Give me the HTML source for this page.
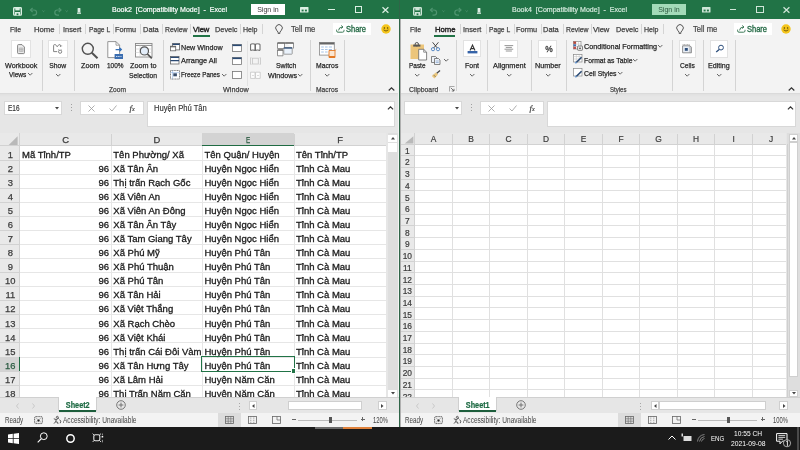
<!DOCTYPE html><html><head><meta charset="utf-8"><style>
html,body{margin:0;padding:0;width:800px;height:450px;overflow:hidden;background:#1c1c1c;}
.t{position:absolute;white-space:nowrap;font-family:"Liberation Sans", sans-serif;}
svg{overflow:visible}
</style></head><body><div style="position:absolute;left:0;top:0;width:800px;height:450px;overflow:hidden;will-change:transform">
<div style="position:absolute;left:0px;top:0px;width:399px;height:19px;background:#217346"></div>
<svg style="position:absolute;left:12.5px;top:6.9px;" width="9" height="8.8" viewBox="0 0 9 8.8"><rect x="0.7" y="0.7" width="7.6" height="7.4" rx="0.8" fill="none" stroke="#dcefe3" stroke-width="1.4"/><rect x="2.3" y="0.8" width="4.4" height="2.6" fill="#dcefe3"/><rect x="2" y="5" width="5" height="3.2" fill="#dcefe3"/><rect x="3.6" y="6.4" width="1.8" height="1.8" fill="#217346"/></svg>
<svg style="position:absolute;left:29px;top:6.5px;" width="17" height="8" viewBox="0 0 17 8"><path d="M1.8 3 H5 a2.6 2.6 0 0 1 0 5.2 H3.5" fill="none" stroke="#4f9570" stroke-width="1.2"/><path d="M3.6 1 L1.4 3 L3.6 5" fill="none" stroke="#4f9570" stroke-width="1.2"/><path d="M13.4 3.6 l1.1 1.1 l1.1 -1.1" fill="none" stroke="#4f9570" stroke-width="0.8"/></svg>
<svg style="position:absolute;left:52.5px;top:6.5px;" width="17" height="8" viewBox="0 0 17 8"><path d="M7.6 3 H4.4 a2.6 2.6 0 0 0 0 5.2 H6" fill="none" stroke="#4f9570" stroke-width="1.2"/><path d="M5.8 1 L8 3 L5.8 5" fill="none" stroke="#4f9570" stroke-width="1.2"/><path d="M12.6 3.6 l1.1 1.1 l1.1 -1.1" fill="none" stroke="#4f9570" stroke-width="0.8"/></svg>
<svg style="position:absolute;left:77px;top:8px;" width="4" height="6" viewBox="0 0 4 6"><rect x="0.6" y="0" width="2.8" height="4.5" rx="0.5" fill="#dbeee3"/><rect x="0" y="4.6" width="4" height="1.2" fill="#dbeee3"/></svg>
<div class="t" style="left:111.60px;top:6.00px;font-size:7.8px;line-height:8.72px;color:#ffffff;transform:scaleX(0.9023);transform-origin:0 0;-webkit-text-stroke:0.2px #ffffff">Book2&nbsp; [Compatibility Mode]&nbsp; -&nbsp; Excel</div>
<div style="position:absolute;left:251px;top:4px;width:34.2px;height:11px;background:#fff"></div>
<div class="t" style="left:256.27px;top:6.00px;font-size:7.8px;line-height:8.72px;color:#3a3a3a;transform:scaleX(0.9014);transform-origin:11.93px 0;">Sign in</div>
<svg style="position:absolute;left:300.0px;top:6.7px;" width="8.5" height="5.6" viewBox="0 0 8.5 5.6"><rect x="0" y="0" width="8.5" height="5.6" rx="0.6" fill="#dcefe3"/><rect x="1.6" y="2.6" width="2" height="1.8" fill="#217346"/><rect x="4.9" y="2.6" width="2" height="1.8" fill="#217346"/></svg>
<div style="position:absolute;left:328.0px;top:8.7px;width:6.7px;height:1.3px;background:#dcefe3"></div>
<div style="position:absolute;left:354.8px;top:6.4px;width:7.4px;height:6.2px;border:1.4px solid #dcefe3;box-sizing:border-box"></div>
<svg style="position:absolute;left:381.9px;top:6.7px;" width="7" height="6" viewBox="0 0 7 6"><path d="M0.5 0.3 L6.4 5.7 M6.4 0.3 L0.5 5.7" stroke="#dcefe3" stroke-width="1.25"/></svg>
<div style="position:absolute;left:0px;top:19px;width:399px;height:74px;background:#f3f3f3"></div>
<div style="position:absolute;left:0px;top:93px;width:399px;height:1px;background:#dadada"></div>
<div style="position:absolute;left:0px;top:94px;width:399px;height:3px;background:linear-gradient(#e0e0e0,#e6e6e6)"></div>
<div class="t" style="left:9.75px;top:26.00px;font-size:7.8px;line-height:8.72px;color:#404040;transform:scaleX(0.8794);transform-origin:0 0;-webkit-text-stroke:0.25px #404040;">File</div>
<div class="t" style="left:34.40px;top:26.00px;font-size:7.8px;line-height:8.72px;color:#404040;transform:scaleX(0.9899);transform-origin:0 0;-webkit-text-stroke:0.25px #404040;">Home</div>
<div class="t" style="left:62.60px;top:26.00px;font-size:7.8px;line-height:8.72px;color:#404040;transform:scaleX(0.9432);transform-origin:0 0;-webkit-text-stroke:0.25px #404040;">Insert</div>
<div class="t" style="left:88.60px;top:26.00px;font-size:7.8px;line-height:8.72px;color:#404040;transform:scaleX(0.8536);transform-origin:0 0;-webkit-text-stroke:0.25px #404040;">Page L</div>
<div class="t" style="left:115.40px;top:26.00px;font-size:7.8px;line-height:8.72px;color:#404040;transform:scaleX(0.9408);transform-origin:0 0;-webkit-text-stroke:0.25px #404040;">Formu</div>
<div class="t" style="left:142.75px;top:26.00px;font-size:7.8px;line-height:8.72px;color:#404040;transform:scaleX(0.9556);transform-origin:0 0;-webkit-text-stroke:0.25px #404040;">Data</div>
<div class="t" style="left:165.00px;top:26.00px;font-size:7.8px;line-height:8.72px;color:#404040;transform:scaleX(0.8750);transform-origin:0 0;-webkit-text-stroke:0.25px #404040;">Review</div>
<div class="t" style="left:192.60px;top:26.00px;font-size:7.8px;line-height:8.72px;color:#222;transform:scaleX(0.9770);transform-origin:0 0;-webkit-text-stroke:0.4px #222">View</div>
<div class="t" style="left:214.50px;top:26.00px;font-size:7.8px;line-height:8.72px;color:#404040;transform:scaleX(0.9436);transform-origin:0 0;-webkit-text-stroke:0.25px #404040;">Develc</div>
<div class="t" style="left:242.50px;top:26.00px;font-size:7.8px;line-height:8.72px;color:#404040;transform:scaleX(0.9037);transform-origin:0 0;-webkit-text-stroke:0.25px #404040;">Help</div>
<div style="position:absolute;left:59.0px;top:24px;width:1px;height:10px;background:#d4d4d4"></div>
<div style="position:absolute;left:85.0px;top:24px;width:1px;height:10px;background:#d4d4d4"></div>
<div style="position:absolute;left:113.0px;top:24px;width:1px;height:10px;background:#d4d4d4"></div>
<div style="position:absolute;left:140.0px;top:24px;width:1px;height:10px;background:#d4d4d4"></div>
<div style="position:absolute;left:162.0px;top:24px;width:1px;height:10px;background:#d4d4d4"></div>
<div style="position:absolute;left:190.0px;top:24px;width:1px;height:10px;background:#d4d4d4"></div>
<div style="position:absolute;left:240.0px;top:24px;width:1px;height:10px;background:#d4d4d4"></div>
<div style="position:absolute;left:262.0px;top:24px;width:1px;height:10px;background:#d4d4d4"></div>
<div style="position:absolute;left:192.5px;top:34.5px;width:17px;height:2px;background:#217346"></div>
<svg style="position:absolute;left:274.8px;top:24.3px;" width="8" height="10" viewBox="0 0 8 10"><path d="M1.6 6.2 A3.3 3.3 0 1 1 6.4 6.2 L4.9 8.2 v1.2 h-1.8 v-1.2 z" fill="none" stroke="#444" stroke-width="0.9" stroke-linejoin="round"/></svg>
<div class="t" style="left:291.20px;top:25.00px;font-size:8.4px;line-height:9.39px;color:#444;transform:scaleX(0.9169);transform-origin:0 0;-webkit-text-stroke:0.2px #444">Tell me</div>
<div style="position:absolute;left:332.6px;top:23px;width:38.5px;height:12px;background:#fff"></div>
<svg style="position:absolute;left:336.0px;top:25.3px;" width="9" height="8" viewBox="0 0 9 8"><path d="M0.6 4.6 v1.2 a1.4 1.4 0 0 0 1.4 1.4 h4.6 a1.4 1.4 0 0 0 1.4 -1.4 v-1" fill="none" stroke="#3d7a58" stroke-width="1"/><path d="M2.6 5.4 q0 -3.2 4 -3.4 M5.2 0.5 l1.8 1.5 l-1.8 1.5" fill="none" stroke="#3d7a58" stroke-width="1"/></svg>
<div class="t" style="left:345.75px;top:25.00px;font-size:8.4px;line-height:9.39px;color:#276b47;transform:scaleX(0.8969);transform-origin:0 0;-webkit-text-stroke:0.35px #276b47">Share</div>
<svg style="position:absolute;left:380.75px;top:23.5px;" width="10" height="10" viewBox="0 0 10 10"><circle cx="5" cy="5" r="4.7" fill="#f4c51c"/><circle cx="3.4" cy="3.9" r="0.75" fill="#5a4500"/><circle cx="6.6" cy="3.9" r="0.75" fill="#5a4500"/><path d="M2.6 5.9 q2.4 2.3 4.8 0" fill="none" stroke="#5a4500" stroke-width="0.8"/></svg>
<svg style="position:absolute;left:387.5px;top:87px;" width="7" height="4" viewBox="0 0 7 4"><path d="M0.7 3.5 L3.5 0.8 L6.3 3.5" fill="none" stroke="#333" stroke-width="1.2"/></svg>
<div style="position:absolute;left:400px;top:0px;width:400px;height:19px;background:#217346"></div>
<svg style="position:absolute;left:412.5px;top:6.9px;" width="9" height="8.8" viewBox="0 0 9 8.8"><rect x="0.7" y="0.7" width="7.6" height="7.4" rx="0.8" fill="none" stroke="#cfe6d8" stroke-width="1.4"/><rect x="2.3" y="0.8" width="4.4" height="2.6" fill="#cfe6d8"/><rect x="2" y="5" width="5" height="3.2" fill="#cfe6d8"/><rect x="3.6" y="6.4" width="1.8" height="1.8" fill="#217346"/></svg>
<svg style="position:absolute;left:429px;top:6.5px;" width="17" height="8" viewBox="0 0 17 8"><path d="M1.8 3 H5 a2.6 2.6 0 0 1 0 5.2 H3.5" fill="none" stroke="#4f9570" stroke-width="1.2"/><path d="M3.6 1 L1.4 3 L3.6 5" fill="none" stroke="#4f9570" stroke-width="1.2"/><path d="M13.4 3.6 l1.1 1.1 l1.1 -1.1" fill="none" stroke="#4f9570" stroke-width="0.8"/></svg>
<svg style="position:absolute;left:452.5px;top:6.5px;" width="17" height="8" viewBox="0 0 17 8"><path d="M7.6 3 H4.4 a2.6 2.6 0 0 0 0 5.2 H6" fill="none" stroke="#4f9570" stroke-width="1.2"/><path d="M5.8 1 L8 3 L5.8 5" fill="none" stroke="#4f9570" stroke-width="1.2"/><path d="M12.6 3.6 l1.1 1.1 l1.1 -1.1" fill="none" stroke="#4f9570" stroke-width="0.8"/></svg>
<svg style="position:absolute;left:477px;top:8px;" width="4" height="6" viewBox="0 0 4 6"><rect x="0.6" y="0" width="2.8" height="4.5" rx="0.5" fill="#dbeee3"/><rect x="0" y="4.6" width="4" height="1.2" fill="#dbeee3"/></svg>
<div class="t" style="left:511.60px;top:6.00px;font-size:7.8px;line-height:8.72px;color:#d5eadd;transform:scaleX(0.9023);transform-origin:0 0;-webkit-text-stroke:0.2px #d5eadd">Book4&nbsp; [Compatibility Mode]&nbsp; -&nbsp; Excel</div>
<div style="position:absolute;left:652px;top:4px;width:34.2px;height:11px;background:#a3dbb9"></div>
<div class="t" style="left:657.27px;top:6.00px;font-size:7.8px;line-height:8.72px;color:#2d5a40;transform:scaleX(0.9014);transform-origin:11.93px 0;">Sign in</div>
<svg style="position:absolute;left:701.5px;top:6.7px;" width="8.5" height="5.6" viewBox="0 0 8.5 5.6"><rect x="0" y="0" width="8.5" height="5.6" rx="0.6" fill="#cfe6d8"/><rect x="1.6" y="2.6" width="2" height="1.8" fill="#217346"/><rect x="4.9" y="2.6" width="2" height="1.8" fill="#217346"/></svg>
<div style="position:absolute;left:729.5px;top:8.7px;width:6.7px;height:1.3px;background:#cfe6d8"></div>
<div style="position:absolute;left:756.3px;top:6.4px;width:7.4px;height:6.2px;border:1.4px solid #cfe6d8;box-sizing:border-box"></div>
<svg style="position:absolute;left:783.4px;top:6.7px;" width="7" height="6" viewBox="0 0 7 6"><path d="M0.5 0.3 L6.4 5.7 M6.4 0.3 L0.5 5.7" stroke="#cfe6d8" stroke-width="1.25"/></svg>
<div style="position:absolute;left:400px;top:19px;width:400px;height:74px;background:#f3f3f3"></div>
<div style="position:absolute;left:400px;top:93px;width:400px;height:1px;background:#dadada"></div>
<div style="position:absolute;left:400px;top:94px;width:400px;height:3px;background:linear-gradient(#e0e0e0,#e6e6e6)"></div>
<div class="t" style="left:410.35px;top:26.00px;font-size:7.8px;line-height:8.72px;color:#404040;transform:scaleX(0.8794);transform-origin:0 0;-webkit-text-stroke:0.25px #404040;">File</div>
<div class="t" style="left:435.00px;top:26.00px;font-size:7.8px;line-height:8.72px;color:#222;transform:scaleX(0.9899);transform-origin:0 0;-webkit-text-stroke:0.4px #222">Home</div>
<div class="t" style="left:463.20px;top:26.00px;font-size:7.8px;line-height:8.72px;color:#404040;transform:scaleX(0.9432);transform-origin:0 0;-webkit-text-stroke:0.25px #404040;">Insert</div>
<div class="t" style="left:489.20px;top:26.00px;font-size:7.8px;line-height:8.72px;color:#404040;transform:scaleX(0.8536);transform-origin:0 0;-webkit-text-stroke:0.25px #404040;">Page L</div>
<div class="t" style="left:516.00px;top:26.00px;font-size:7.8px;line-height:8.72px;color:#404040;transform:scaleX(0.9408);transform-origin:0 0;-webkit-text-stroke:0.25px #404040;">Formu</div>
<div class="t" style="left:543.35px;top:26.00px;font-size:7.8px;line-height:8.72px;color:#404040;transform:scaleX(0.9556);transform-origin:0 0;-webkit-text-stroke:0.25px #404040;">Data</div>
<div class="t" style="left:565.60px;top:26.00px;font-size:7.8px;line-height:8.72px;color:#404040;transform:scaleX(0.8750);transform-origin:0 0;-webkit-text-stroke:0.25px #404040;">Review</div>
<div class="t" style="left:593.20px;top:26.00px;font-size:7.8px;line-height:8.72px;color:#404040;transform:scaleX(0.9770);transform-origin:0 0;-webkit-text-stroke:0.25px #404040;">View</div>
<div class="t" style="left:615.70px;top:26.00px;font-size:7.8px;line-height:8.72px;color:#404040;transform:scaleX(0.9436);transform-origin:0 0;-webkit-text-stroke:0.25px #404040;">Develc</div>
<div class="t" style="left:643.70px;top:26.00px;font-size:7.8px;line-height:8.72px;color:#404040;transform:scaleX(0.9037);transform-origin:0 0;-webkit-text-stroke:0.25px #404040;">Help</div>
<div style="position:absolute;left:459.6px;top:24px;width:1px;height:10px;background:#d4d4d4"></div>
<div style="position:absolute;left:485.6px;top:24px;width:1px;height:10px;background:#d4d4d4"></div>
<div style="position:absolute;left:513.6px;top:24px;width:1px;height:10px;background:#d4d4d4"></div>
<div style="position:absolute;left:540.6px;top:24px;width:1px;height:10px;background:#d4d4d4"></div>
<div style="position:absolute;left:562.6px;top:24px;width:1px;height:10px;background:#d4d4d4"></div>
<div style="position:absolute;left:590.6px;top:24px;width:1px;height:10px;background:#d4d4d4"></div>
<div style="position:absolute;left:641.2px;top:24px;width:1px;height:10px;background:#d4d4d4"></div>
<div style="position:absolute;left:663.2px;top:24px;width:1px;height:10px;background:#d4d4d4"></div>
<div style="position:absolute;left:434.4px;top:34.5px;width:20.6px;height:2px;background:#217346"></div>
<svg style="position:absolute;left:676.1px;top:24.3px;" width="8" height="10" viewBox="0 0 8 10"><path d="M1.6 6.2 A3.3 3.3 0 1 1 6.4 6.2 L4.9 8.2 v1.2 h-1.8 v-1.2 z" fill="none" stroke="#444" stroke-width="0.9" stroke-linejoin="round"/></svg>
<div class="t" style="left:692.50px;top:25.00px;font-size:8.4px;line-height:9.39px;color:#444;transform:scaleX(0.9169);transform-origin:0 0;-webkit-text-stroke:0.2px #444">Tell me</div>
<div style="position:absolute;left:733.9000000000001px;top:23px;width:38.5px;height:12px;background:#fff"></div>
<svg style="position:absolute;left:737.3px;top:25.3px;" width="9" height="8" viewBox="0 0 9 8"><path d="M0.6 4.6 v1.2 a1.4 1.4 0 0 0 1.4 1.4 h4.6 a1.4 1.4 0 0 0 1.4 -1.4 v-1" fill="none" stroke="#3d7a58" stroke-width="1"/><path d="M2.6 5.4 q0 -3.2 4 -3.4 M5.2 0.5 l1.8 1.5 l-1.8 1.5" fill="none" stroke="#3d7a58" stroke-width="1"/></svg>
<div class="t" style="left:747.05px;top:25.00px;font-size:8.4px;line-height:9.39px;color:#276b47;transform:scaleX(0.8969);transform-origin:0 0;-webkit-text-stroke:0.35px #276b47">Share</div>
<svg style="position:absolute;left:781.35px;top:23.5px;" width="10" height="10" viewBox="0 0 10 10"><circle cx="5" cy="5" r="4.7" fill="#f4c51c"/><circle cx="3.4" cy="3.9" r="0.75" fill="#5a4500"/><circle cx="6.6" cy="3.9" r="0.75" fill="#5a4500"/><path d="M2.6 5.9 q2.4 2.3 4.8 0" fill="none" stroke="#5a4500" stroke-width="0.8"/></svg>
<svg style="position:absolute;left:788.1px;top:87px;" width="7" height="4" viewBox="0 0 7 4"><path d="M0.7 3.5 L3.5 0.8 L6.3 3.5" fill="none" stroke="#333" stroke-width="1.2"/></svg>
<div style="position:absolute;left:11.4px;top:39.6px;width:19.200000000000003px;height:18.4px;background:#fff;border:1px solid #e2e2e2;box-sizing:border-box"></div>
<svg style="position:absolute;left:16.6px;top:44px;" width="8" height="9.5" viewBox="0 0 8 9.5"><path d="M0.6 1.4 a0.8 0.8 0 0 1 0.8 -0.8 h3.6 l2.4 2.4 v5.8 a0.8 0.8 0 0 1 -0.8 0.8 h-5.2 a0.8 0.8 0 0 1 -0.8 -0.8 z" fill="#ececec" stroke="#777" stroke-width="0.9"/><path d="M2.3 4 h3.6 v3.4 h-3.6 z M2.3 5.7 h3.6 M4.1 4 v3.4" fill="none" stroke="#999" stroke-width="0.55"/></svg>
<div class="t" style="left:4.70px;top:62.00px;font-size:7.8px;line-height:8.72px;color:#262626;transform:scaleX(0.9233);transform-origin:0 0;-webkit-text-stroke:0.25px #262626;">Workbook</div>
<div class="t" style="left:8.80px;top:71.00px;font-size:7.8px;line-height:8.72px;color:#262626;transform:scaleX(0.8421);transform-origin:0 0;-webkit-text-stroke:0.25px #262626;">Views</div>
<svg style="position:absolute;left:26.8px;top:72.30000000000001px;" width="6.4" height="4.2" viewBox="0 0 6.4 4.2"><path d="M1 1 L3.2 3.2 L5.4 1" fill="none" stroke="#555" stroke-width="0.9"/></svg>
<div style="position:absolute;left:42px;top:40px;width:1px;height:51px;background:#d4d4d4"></div>
<div style="position:absolute;left:48.4px;top:39.6px;width:19.199999999999996px;height:18.4px;background:#fff;border:1px solid #e2e2e2;box-sizing:border-box"></div>
<svg style="position:absolute;left:53px;top:43.5px;" width="10" height="10" viewBox="0 0 10 10"><path d="M0.6 7.6 V1.6 a1 1 0 0 1 1 -1 h0.9 l1.7 2.2 l1.7 -2.2 h0.6 a1 1 0 0 1 1 1 v1.2" fill="none" stroke="#777" stroke-width="0.9"/><path d="M0.6 7.6 h3.6" stroke="#777" stroke-width="0.9"/><path d="M6.8 1.9 h2.4 M5.2 5.4 l1 0.8 M9 5.4 l-0.8 0.8" stroke="#888" stroke-width="0.7"/><circle cx="7.1" cy="7.7" r="1.6" fill="#fff" stroke="#777" stroke-width="0.9"/></svg>
<div class="t" style="left:48.23px;top:62.00px;font-size:7.8px;line-height:8.72px;color:#262626;transform:scaleX(0.8704);transform-origin:9.77px 0;-webkit-text-stroke:0.25px #262626;">Show</div>
<svg style="position:absolute;left:54.8px;top:72.5px;" width="6.4" height="4.2" viewBox="0 0 6.4 4.2"><path d="M1 1 L3.2 3.2 L5.4 1" fill="none" stroke="#555" stroke-width="0.9"/></svg>
<div style="position:absolute;left:73.5px;top:40px;width:1px;height:51px;background:#d4d4d4"></div>
<svg style="position:absolute;left:81px;top:42px;" width="18" height="17" viewBox="0 0 18 17"><circle cx="6.8" cy="6.8" r="5.5" fill="none" stroke="#505050" stroke-width="1.4"/><path d="M10.8 10.8 L16.5 16.3" stroke="#505050" stroke-width="2"/></svg>
<div class="t" style="left:81.40px;top:62.00px;font-size:7.8px;line-height:8.72px;color:#262626;transform:scaleX(0.9279);transform-origin:0 0;-webkit-text-stroke:0.25px #262626;">Zoom</div>
<svg style="position:absolute;left:107px;top:41px;" width="17" height="19" viewBox="0 0 17 19"><path d="M0.8 0.6 h8.2 l3.6 3.6 v12.4 h-11.8 z" fill="#fff" stroke="#8a8a8a" stroke-width="0.9"/><path d="M9 0.6 v3.6 h3.6" fill="none" stroke="#8a8a8a" stroke-width="0.8"/><path d="M8.6 8.6 h5.6 M12.4 6.8 l1.9 1.8 l-1.9 1.8" fill="none" stroke="#3570b8" stroke-width="1.3"/><rect x="7.6" y="13" width="8.4" height="5" fill="#3a6db0"/><path d="M9 15.5 h5.6" stroke="#c9d9ee" stroke-width="1" stroke-dasharray="1.2 0.5"/></svg>
<div class="t" style="left:107.30px;top:62.00px;font-size:7.8px;line-height:8.72px;color:#262626;transform:scaleX(0.8270);transform-origin:0 0;-webkit-text-stroke:0.25px #262626;">100%</div>
<svg style="position:absolute;left:134.5px;top:42.5px;" width="18" height="16" viewBox="0 0 18 16"><rect x="0.5" y="0.5" width="16.5" height="13.5" fill="#fff" stroke="#888" stroke-width="0.9"/><path d="M0.5 2.4 h16.5" stroke="#888" stroke-width="1"/><path d="M0.5 6 h16.5 M0.5 9.5 h16.5 M5 2.4 v11.6 M11 2.4 v11.6" stroke="#cfcfcf" stroke-width="0.6"/><circle cx="9.4" cy="7.9" r="4.1" fill="#e3edf9" stroke="#555" stroke-width="1.2"/><path d="M12.3 10.8 L16.8 15.4" stroke="#555" stroke-width="1.7"/></svg>
<div class="t" style="left:129.50px;top:62.00px;font-size:7.8px;line-height:8.72px;color:#262626;transform:scaleX(0.9262);transform-origin:0 0;-webkit-text-stroke:0.25px #262626;">Zoom to</div>
<div class="t" style="left:129.00px;top:72.00px;font-size:7.8px;line-height:8.72px;color:#262626;transform:scaleX(0.8726);transform-origin:0 0;-webkit-text-stroke:0.25px #262626;">Selection</div>
<div class="t" style="left:109.00px;top:86.00px;font-size:7.8px;line-height:8.72px;color:#404040;transform:scaleX(0.8527);transform-origin:0 0;-webkit-text-stroke:0.25px #404040;">Zoom</div>
<div style="position:absolute;left:163px;top:40px;width:1px;height:51px;background:#d4d4d4"></div>
<svg style="position:absolute;left:169.5px;top:42.5px;" width="10" height="8.5" viewBox="0 0 10 8.5"><rect x="2.6" y="0.5" width="7" height="6.4" fill="#fff" stroke="#666" stroke-width="0.8"/><path d="M2.6 1.3 h7" stroke="#2b4a73" stroke-width="1.4"/><rect x="0.5" y="3.2" width="5.2" height="4.6" fill="#fff" stroke="#666" stroke-width="0.8"/><path d="M0.5 3.8 h5.2" stroke="#555" stroke-width="1"/></svg>
<div class="t" style="left:181.00px;top:44.00px;font-size:7.8px;line-height:8.72px;color:#262626;transform:scaleX(0.9136);transform-origin:0 0;-webkit-text-stroke:0.25px #262626;">New Window</div>
<svg style="position:absolute;left:169.5px;top:56px;" width="9.5" height="8.5" viewBox="0 0 9.5 8.5"><rect x="0.5" y="0.5" width="8.5" height="7.5" fill="#fff" stroke="#666" stroke-width="0.8"/><path d="M0.5 1.3 h8.5 M0.5 4.6 h8.5" stroke="#2b4a73" stroke-width="1.3"/></svg>
<div class="t" style="left:181.00px;top:57.00px;font-size:7.8px;line-height:8.72px;color:#262626;transform:scaleX(0.9435);transform-origin:0 0;-webkit-text-stroke:0.25px #262626;">Arrange All</div>
<svg style="position:absolute;left:169.7px;top:69.9px;" width="10" height="9.5" viewBox="0 0 10 9.5"><rect x="0.5" y="0.5" width="9" height="8.5" fill="#fff" stroke="#666" stroke-width="0.8" stroke-dasharray="1.1 0.5"/><path d="M0.5 2.6 h9 M2.6 0.5 v8.5" stroke="#8fb4e0" stroke-width="0.6"/><rect x="3.3" y="3.3" width="3.6" height="3" fill="#3b4f6b"/></svg>
<div class="t" style="left:181.00px;top:71.00px;font-size:7.8px;line-height:8.72px;color:#262626;transform:scaleX(0.8031);transform-origin:0 0;-webkit-text-stroke:0.25px #262626;">Freeze Panes</div>
<svg style="position:absolute;left:220.8px;top:72.5px;" width="6.4" height="4.2" viewBox="0 0 6.4 4.2"><path d="M1 1 L3.2 3.2 L5.4 1" fill="none" stroke="#555" stroke-width="0.9"/></svg>
<svg style="position:absolute;left:231.8px;top:43.5px;" width="10" height="8" viewBox="0 0 10 8"><rect x="0.5" y="0.5" width="9" height="7" fill="#fff" stroke="#777" stroke-width="0.8"/><rect x="0.5" y="0.5" width="9" height="1.6" fill="#2b4a73"/></svg>
<svg style="position:absolute;left:231.8px;top:57px;" width="10" height="8" viewBox="0 0 10 8"><rect x="0.5" y="0.5" width="9" height="7" fill="#fff" stroke="#777" stroke-width="0.8"/><rect x="0.5" y="0.5" width="9" height="1.6" fill="#2b4a73"/></svg>
<svg style="position:absolute;left:231.8px;top:71px;" width="10" height="8" viewBox="0 0 10 8"><rect x="0.5" y="0.5" width="9" height="7" fill="#fff" stroke="#777" stroke-width="0.8"/></svg>
<div style="position:absolute;left:246.8px;top:41px;width:1px;height:45px;background:#e2e2e2"></div>
<svg style="position:absolute;left:250px;top:43px;" width="11" height="8" viewBox="0 0 11 8"><path d="M0.6 1.2 q2.2 -0.8 4.6 0 v6.2 q-2.4 -0.8 -4.6 0 z M5.2 1.2 q2.4 -0.8 4.8 0 v6.2 q-2.4 -0.8 -4.8 0 z" fill="#fff" stroke="#555" stroke-width="0.9"/></svg>
<svg style="position:absolute;left:250px;top:57px;" width="11" height="8" viewBox="0 0 11 8"><path d="M1.5 0.8 h-1 v6.5 h1 M9.5 0.8 h1 v6.5 h-1" fill="none" stroke="#c4c4c4" stroke-width="0.8"/><rect x="2.5" y="1.2" width="5.8" height="5.8" fill="none" stroke="#c4c4c4" stroke-width="0.8"/></svg>
<svg style="position:absolute;left:250px;top:71px;" width="11" height="8" viewBox="0 0 11 8"><path d="M0.6 1.2 h4.4 v6.2 h-4.4 z M5.6 1.2 h4.6 v6.2 h-4.6 z" fill="#fff" stroke="#c4c4c4" stroke-width="0.8"/><circle cx="3" cy="4.5" r="0.7" fill="#c4c4c4"/><circle cx="8" cy="4.5" r="0.7" fill="#c4c4c4"/></svg>
<div class="t" style="left:223.30px;top:86.00px;font-size:7.8px;line-height:8.72px;color:#404040;transform:scaleX(0.9258);transform-origin:0 0;-webkit-text-stroke:0.25px #404040;">Window</div>
<svg style="position:absolute;left:277px;top:42px;" width="18" height="15" viewBox="0 0 18 15"><path d="M0.5 1 h7 v5.5 h-7 z M8.8 1 h7.7 v5.5" fill="#fff" stroke="#777" stroke-width="0.8"/><path d="M0.5 1 h16" stroke="#666" stroke-width="1.4"/><path d="M0.5 8 h5.5 v5.8 h-5.5 z" fill="#fff" stroke="#777" stroke-width="0.8"/><path d="M0.5 8 h5.5" stroke="#666" stroke-width="1.3"/><rect x="6.8" y="5.6" width="8.4" height="6.6" rx="0.5" fill="#eaf2fb" stroke="#888" stroke-width="0.8"/><path d="M6.8 6 h8.4" stroke="#2b4a73" stroke-width="1.3"/></svg>
<div class="t" style="left:275.60px;top:62.00px;font-size:7.8px;line-height:8.72px;color:#262626;transform:scaleX(0.8881);transform-origin:0 0;-webkit-text-stroke:0.25px #262626;">Switch</div>
<div class="t" style="left:267.70px;top:72.00px;font-size:7.8px;line-height:8.72px;color:#262626;transform:scaleX(0.9164);transform-origin:0 0;-webkit-text-stroke:0.25px #262626;">Windows</div>
<svg style="position:absolute;left:297.3px;top:72.9px;" width="6.4" height="4.2" viewBox="0 0 6.4 4.2"><path d="M1 1 L3.2 3.2 L5.4 1" fill="none" stroke="#555" stroke-width="0.9"/></svg>
<div style="position:absolute;left:309.7px;top:40px;width:1px;height:51px;background:#d4d4d4"></div>
<svg style="position:absolute;left:318.5px;top:42px;" width="19" height="17" viewBox="0 0 19 17"><rect x="0.5" y="0.5" width="14.8" height="12.6" fill="#fff" stroke="#888" stroke-width="0.8"/><rect x="0.5" y="0.5" width="14.8" height="2" fill="#666"/><path d="M2.2 5 h2.6 M6 5 h2.6 M9.8 5 h3.2 M2.2 7.5 h2.6 M6 7.5 h2.6 M9.8 7.5 h3.2 M2.2 10 h2.6 M6 10 h2.6" stroke="#8fb4e0" stroke-width="0.8"/><path d="M10 8.5 h6 v7 h-6 z" fill="#fbe6d2" stroke="#e37a26" stroke-width="0.9"/><rect x="10" y="14" width="6" height="2" fill="#e37a26"/><path d="M16 8.5 l1.2 -1" stroke="#e37a26" stroke-width="0.9"/></svg>
<div class="t" style="left:315.70px;top:62.00px;font-size:7.8px;line-height:8.72px;color:#262626;transform:scaleX(0.8722);transform-origin:0 0;-webkit-text-stroke:0.25px #262626;">Macros</div>
<svg style="position:absolute;left:323.8px;top:72.5px;" width="6.4" height="4.2" viewBox="0 0 6.4 4.2"><path d="M1 1 L3.2 3.2 L5.4 1" fill="none" stroke="#555" stroke-width="0.9"/></svg>
<div class="t" style="left:316.00px;top:86.00px;font-size:7.8px;line-height:8.72px;color:#404040;transform:scaleX(0.8604);transform-origin:0 0;-webkit-text-stroke:0.25px #404040;">Macros</div>
<div style="position:absolute;left:344px;top:40px;width:1px;height:51px;background:#d4d4d4"></div>
<svg style="position:absolute;left:409.5px;top:41.5px;" width="18" height="18.5" viewBox="0 0 18 18.5"><rect x="0.5" y="2.5" width="13.5" height="14.5" fill="#ecc57a"/><rect x="3.2" y="2.6" width="7.2" height="2" fill="#555"/><circle cx="6.8" cy="2.2" r="1.7" fill="none" stroke="#555" stroke-width="1"/><path d="M8.7 7.3 h5 l2.9 2.9 v7.8 h-7.9 z" fill="#fff" stroke="#666" stroke-width="0.8"/><path d="M13.7 7.3 v2.9 h2.9" fill="none" stroke="#666" stroke-width="0.7"/></svg>
<div class="t" style="left:408.80px;top:62.00px;font-size:7.8px;line-height:8.72px;color:#262626;transform:scaleX(0.8273);transform-origin:0 0;-webkit-text-stroke:0.25px #262626;">Paste</div>
<svg style="position:absolute;left:413.8px;top:72.9px;" width="6.4" height="4.2" viewBox="0 0 6.4 4.2"><path d="M1 1 L3.2 3.2 L5.4 1" fill="none" stroke="#555" stroke-width="0.9"/></svg>
<svg style="position:absolute;left:431.4px;top:41.8px;" width="9" height="9.2" viewBox="0 0 9 9.2"><circle cx="2" cy="7.2" r="1.6" fill="none" stroke="#4a7fc0" stroke-width="0.9"/><circle cx="7" cy="7.2" r="1.6" fill="none" stroke="#4a7fc0" stroke-width="0.9"/><path d="M2.9 5.8 L7.4 0.3 M6.1 5.8 L1.6 0.3" stroke="#333" stroke-width="0.9"/></svg>
<svg style="position:absolute;left:431.4px;top:56px;" width="9.5" height="8.8" viewBox="0 0 9.5 8.8"><path d="M0.5 0.5 h4 l1.5 1.5 v4.5 h-5.5 z" fill="#eef3fa" stroke="#666" stroke-width="0.8"/><path d="M3.5 2.5 h4 l1.5 1.5 v4.5 h-5.5 z" fill="#eef3fa" stroke="#666" stroke-width="0.8"/><path d="M4.7 5 h3 M4.7 6.5 h3" stroke="#6f95c6" stroke-width="0.6"/></svg>
<svg style="position:absolute;left:442.8px;top:58.4px;" width="6.4" height="4.2" viewBox="0 0 6.4 4.2"><path d="M1 1 L3.2 3.2 L5.4 1" fill="none" stroke="#555" stroke-width="0.9"/></svg>
<svg style="position:absolute;left:431px;top:70px;" width="10" height="9" viewBox="0 0 10 9"><path d="M5.5 3.5 L9 0.5" stroke="#444" stroke-width="1.3"/><path d="M0.8 6 L4.8 2.5 L7 4.6 L3.5 8.6 z" fill="#ebc77c"/><path d="M2.5 4.8 l2.2 2.2" stroke="#555" stroke-width="0.6"/></svg>
<div class="t" style="left:408.50px;top:86.00px;font-size:7.8px;line-height:8.72px;color:#404040;transform:scaleX(0.8747);transform-origin:0 0;-webkit-text-stroke:0.25px #404040;">Clipboard</div>
<svg style="position:absolute;left:449px;top:85.5px;" width="6" height="6" viewBox="0 0 6 6"><path d="M0.5 5.5 v-5 h5" fill="none" stroke="#888" stroke-width="0.7"/><path d="M1.8 1.8 L5 5 M2.8 5 h2.2 v-2.2" fill="none" stroke="#555" stroke-width="0.8"/></svg>
<div style="position:absolute;left:456px;top:40px;width:1px;height:51px;background:#d4d4d4"></div>
<div style="position:absolute;left:462.6px;top:40px;width:18.799999999999955px;height:17.299999999999997px;background:#fff;border:1px solid #e2e2e2;box-sizing:border-box"></div>
<svg style="position:absolute;left:466.5px;top:43.5px;" width="11" height="10" viewBox="0 0 11 10"><path d="M3 6.4 L5.5 1 L8 6.4 M3.9 4.6 h3.2" fill="none" stroke="#333" stroke-width="1.1"/><rect x="0.6" y="7" width="9.8" height="2.4" fill="#3563a8"/></svg>
<div class="t" style="left:465.00px;top:62.00px;font-size:7.8px;line-height:8.72px;color:#262626;transform:scaleX(0.8970);transform-origin:0 0;-webkit-text-stroke:0.25px #262626;">Font</div>
<svg style="position:absolute;left:468.8px;top:72.5px;" width="6.4" height="4.2" viewBox="0 0 6.4 4.2"><path d="M1 1 L3.2 3.2 L5.4 1" fill="none" stroke="#555" stroke-width="0.9"/></svg>
<div style="position:absolute;left:487.2px;top:40px;width:1px;height:51px;background:#d4d4d4"></div>
<div style="position:absolute;left:499.2px;top:40px;width:19.19999999999999px;height:17.5px;background:#fff;border:1px solid #e2e2e2;box-sizing:border-box"></div>
<svg style="position:absolute;left:504px;top:44.8px;" width="10" height="8" viewBox="0 0 10 8"><path d="M0.5 0.6 h8.7 M1.8 2.4 h6.1 M0.5 4.2 h8.7 M1.8 6 h6.1" stroke="#8a8a8a" stroke-width="0.9"/></svg>
<div class="t" style="left:492.50px;top:62.00px;font-size:7.8px;line-height:8.72px;color:#262626;transform:scaleX(0.9427);transform-origin:0 0;-webkit-text-stroke:0.25px #262626;">Alignment</div>
<svg style="position:absolute;left:505.6px;top:72.5px;" width="6.4" height="4.2" viewBox="0 0 6.4 4.2"><path d="M1 1 L3.2 3.2 L5.4 1" fill="none" stroke="#555" stroke-width="0.9"/></svg>
<div style="position:absolute;left:530.5px;top:40px;width:1px;height:51px;background:#d4d4d4"></div>
<div style="position:absolute;left:538.3px;top:40px;width:19.200000000000045px;height:17.5px;background:#fff;border:1px solid #e2e2e2;box-sizing:border-box"></div>
<div class="t" style="left:544.70px;top:44.00px;font-size:9px;line-height:10.06px;color:#333;transform:scaleX(0.9374);transform-origin:4.00px 0;-webkit-text-stroke:0.3px #333">%</div>
<div class="t" style="left:535.20px;top:62.00px;font-size:7.8px;line-height:8.72px;color:#262626;transform:scaleX(0.9299);transform-origin:0 0;-webkit-text-stroke:0.25px #262626;">Number</div>
<svg style="position:absolute;left:544.8px;top:72.5px;" width="6.4" height="4.2" viewBox="0 0 6.4 4.2"><path d="M1 1 L3.2 3.2 L5.4 1" fill="none" stroke="#555" stroke-width="0.9"/></svg>
<div style="position:absolute;left:566px;top:40px;width:1px;height:51px;background:#d4d4d4"></div>
<svg style="position:absolute;left:572.9px;top:40.9px;" width="10" height="9.5" viewBox="0 0 10 9.5"><rect x="0.5" y="0.5" width="7.5" height="7.5" fill="#fff" stroke="#888" stroke-width="0.7"/><rect x="0.5" y="0.5" width="2.6" height="2.6" fill="#b5473a"/><rect x="0.5" y="3.1" width="2.6" height="2.4" fill="#3d6fb6"/><rect x="0.5" y="5.5" width="2.6" height="2.5" fill="#c0504d"/><path d="M0.5 3.1 h7.5 M0.5 5.5 h7.5 M5.5 0.5 v7.5" stroke="#bbb" stroke-width="0.5"/><rect x="4.6" y="5" width="4.9" height="4.3" rx="0.6" fill="#eee" stroke="#666" stroke-width="0.8"/><circle cx="7" cy="7.2" r="0.8" fill="#222"/></svg>
<div class="t" style="left:583.70px;top:43.00px;font-size:7.8px;line-height:8.72px;color:#262626;transform:scaleX(0.9302);transform-origin:0 0;-webkit-text-stroke:0.25px #262626;">Conditional Formatting</div>
<svg style="position:absolute;left:656.8px;top:44.1px;" width="6.4" height="4.2" viewBox="0 0 6.4 4.2"><path d="M1 1 L3.2 3.2 L5.4 1" fill="none" stroke="#555" stroke-width="0.9"/></svg>
<svg style="position:absolute;left:572.9px;top:54.1px;" width="10" height="9.5" viewBox="0 0 10 9.5"><rect x="0.5" y="0.5" width="8.5" height="7.5" fill="#fff" stroke="#888" stroke-width="0.7"/><path d="M0.5 2.6 h8.5 M0.5 5 h8.5 M3.3 0.5 v7.5 M6.2 0.5 v7.5" stroke="#bbb" stroke-width="0.5"/><path d="M3 8.8 L8.6 3.2" stroke="#2b4a73" stroke-width="1.6"/><path d="M2.2 9.3 L3.4 8.1" stroke="#6d9fd9" stroke-width="1.6"/></svg>
<div class="t" style="left:583.70px;top:57.00px;font-size:7.8px;line-height:8.72px;color:#262626;transform:scaleX(0.8695);transform-origin:0 0;-webkit-text-stroke:0.25px #262626;">Format as Table</div>
<svg style="position:absolute;left:632.3px;top:57.9px;" width="6.4" height="4.2" viewBox="0 0 6.4 4.2"><path d="M1 1 L3.2 3.2 L5.4 1" fill="none" stroke="#555" stroke-width="0.9"/></svg>
<svg style="position:absolute;left:572.9px;top:67.8px;" width="10" height="9.5" viewBox="0 0 10 9.5"><rect x="0.5" y="0.5" width="8.5" height="7.5" fill="#fff" stroke="#888" stroke-width="0.7"/><path d="M3 8.8 L8.6 3.2" stroke="#2b4a73" stroke-width="1.6"/><path d="M2.2 9.3 L3.4 8.1" stroke="#6d9fd9" stroke-width="1.6"/></svg>
<div class="t" style="left:583.70px;top:70.00px;font-size:7.8px;line-height:8.72px;color:#262626;transform:scaleX(0.8820);transform-origin:0 0;-webkit-text-stroke:0.25px #262626;">Cell Styles</div>
<svg style="position:absolute;left:616.8px;top:71.4px;" width="6.4" height="4.2" viewBox="0 0 6.4 4.2"><path d="M1 1 L3.2 3.2 L5.4 1" fill="none" stroke="#555" stroke-width="0.9"/></svg>
<div class="t" style="left:610.30px;top:86.00px;font-size:7.8px;line-height:8.72px;color:#404040;transform:scaleX(0.7769);transform-origin:0 0;-webkit-text-stroke:0.25px #404040;">Styles</div>
<div style="position:absolute;left:671.5px;top:40px;width:1px;height:51px;background:#d4d4d4"></div>
<div style="position:absolute;left:678.6px;top:39.5px;width:17.600000000000023px;height:18.0px;background:#fff;border:1px solid #e2e2e2;box-sizing:border-box"></div>
<svg style="position:absolute;left:682.2px;top:44px;" width="10" height="9.5" viewBox="0 0 10 9.5"><path d="M0.6 1.8 h7.4 l1.4 1.4 v5.6 h-8.8 z" fill="#e9eef5" stroke="#777" stroke-width="0.8"/><path d="M0.6 0.6 h7.4" stroke="#888" stroke-width="0.7" stroke-dasharray="1 0.5"/><path d="M8 1.8 v7" stroke="#888" stroke-width="0.6"/><rect x="2.8" y="4" width="3" height="2.8" fill="#2d4f7c"/></svg>
<div class="t" style="left:680.00px;top:62.00px;font-size:7.8px;line-height:8.72px;color:#262626;transform:scaleX(0.8535);transform-origin:0 0;-webkit-text-stroke:0.25px #262626;">Cells</div>
<svg style="position:absolute;left:684.1999999999999px;top:72.5px;" width="6.4" height="4.2" viewBox="0 0 6.4 4.2"><path d="M1 1 L3.2 3.2 L5.4 1" fill="none" stroke="#555" stroke-width="0.9"/></svg>
<div style="position:absolute;left:703.3px;top:40px;width:1px;height:51px;background:#d4d4d4"></div>
<div style="position:absolute;left:710px;top:39.5px;width:18px;height:18.0px;background:#fff;border:1px solid #e2e2e2;box-sizing:border-box"></div>
<svg style="position:absolute;left:714.5px;top:44px;" width="10" height="10" viewBox="0 0 10 10"><circle cx="6" cy="3.6" r="2.4" fill="#fff" stroke="#2d4f7c" stroke-width="1"/><path d="M4.2 5.4 L1.2 8" stroke="#2d4f7c" stroke-width="1.3"/></svg>
<div class="t" style="left:708.00px;top:62.00px;font-size:7.8px;line-height:8.72px;color:#262626;transform:scaleX(0.9140);transform-origin:0 0;-webkit-text-stroke:0.25px #262626;">Editing</div>
<svg style="position:absolute;left:715.8px;top:72.5px;" width="6.4" height="4.2" viewBox="0 0 6.4 4.2"><path d="M1 1 L3.2 3.2 L5.4 1" fill="none" stroke="#555" stroke-width="0.9"/></svg>
<div style="position:absolute;left:735px;top:40px;width:1px;height:51px;background:#d4d4d4"></div>
<div style="position:absolute;left:0px;top:97px;width:399px;height:300px;background:#e6e6e6"></div>
<div style="position:absolute;left:3.9px;top:100.5px;width:58.3px;height:14.5px;background:#fff;border:1px solid #d8d8d8;box-sizing:border-box"></div>
<div class="t" style="left:7.50px;top:104.00px;font-size:8.4px;line-height:9.39px;color:#333;transform:scaleX(0.7763);transform-origin:0 0;-webkit-text-stroke:0.15px #333">E16</div>
<svg style="position:absolute;left:54.6px;top:106.6px;" width="4" height="2.4" viewBox="0 0 4 2.4"><path d="M0 0 h4 l-2 2.4 z" fill="#444"/></svg>
<div style="position:absolute;left:70.5px;top:104px;width:1px;height:1.2px;background:#a0a0a0"></div>
<div style="position:absolute;left:70.5px;top:107px;width:1px;height:1.2px;background:#a0a0a0"></div>
<div style="position:absolute;left:70.5px;top:110px;width:1px;height:1.2px;background:#a0a0a0"></div>
<div style="position:absolute;left:80.4px;top:100.5px;width:63.6px;height:14.5px;background:#fff;border:1px solid #d8d8d8;box-sizing:border-box"></div>
<svg style="position:absolute;left:88px;top:104.5px;" width="7" height="7" viewBox="0 0 7 7"><path d="M0.5 0.5 L6.5 6.5 M6.5 0.5 L0.5 6.5" stroke="#9a9a9a" stroke-width="0.8"/></svg>
<svg style="position:absolute;left:109px;top:104.5px;" width="8" height="7" viewBox="0 0 8 7"><path d="M0.5 3.5 L3 6 L7.5 0.5" fill="none" stroke="#9a9a9a" stroke-width="0.8"/></svg>
<div class="t" style="left:129.5px;top:102.5px;font-size:8.6px;line-height:10px;color:#444;font-family:'Liberation Serif',serif;font-style:italic;-webkit-text-stroke:0.2px #444">f<span style="font-size:6px">x</span></div>
<div style="position:absolute;left:146.6px;top:100.5px;width:248.4px;height:26.2px;background:#fff;border:1px solid #d8d8d8;box-sizing:border-box"></div>
<div class="t" style="left:153.80px;top:104.00px;font-size:8.4px;line-height:9.39px;color:#333;transform:scaleX(0.9103);transform-origin:0 0;-webkit-text-stroke:0.15px #333">Huyện Phú Tân</div>
<svg style="position:absolute;left:387px;top:105.5px;" width="7" height="4" viewBox="0 0 7 4"><path d="M0.9 3.4 L3.5 0.9 L6.1 3.4" fill="none" stroke="#333" stroke-width="1.2"/></svg>
<div style="position:absolute;left:400px;top:97px;width:400px;height:300px;background:#e6e6e6"></div>
<div style="position:absolute;left:403.9px;top:100.5px;width:58.3px;height:14.5px;background:#fff;border:1px solid #d8d8d8;box-sizing:border-box"></div>
<svg style="position:absolute;left:454.6px;top:106.6px;" width="4" height="2.4" viewBox="0 0 4 2.4"><path d="M0 0 h4 l-2 2.4 z" fill="#444"/></svg>
<div style="position:absolute;left:470.5px;top:104px;width:1px;height:1.2px;background:#a0a0a0"></div>
<div style="position:absolute;left:470.5px;top:107px;width:1px;height:1.2px;background:#a0a0a0"></div>
<div style="position:absolute;left:470.5px;top:110px;width:1px;height:1.2px;background:#a0a0a0"></div>
<div style="position:absolute;left:480.4px;top:100.5px;width:63.6px;height:14.5px;background:#fff;border:1px solid #d8d8d8;box-sizing:border-box"></div>
<svg style="position:absolute;left:488px;top:104.5px;" width="7" height="7" viewBox="0 0 7 7"><path d="M0.5 0.5 L6.5 6.5 M6.5 0.5 L0.5 6.5" stroke="#9a9a9a" stroke-width="0.8"/></svg>
<svg style="position:absolute;left:509px;top:104.5px;" width="8" height="7" viewBox="0 0 8 7"><path d="M0.5 3.5 L3 6 L7.5 0.5" fill="none" stroke="#9a9a9a" stroke-width="0.8"/></svg>
<div class="t" style="left:529.5px;top:102.5px;font-size:8.6px;line-height:10px;color:#444;font-family:'Liberation Serif',serif;font-style:italic;-webkit-text-stroke:0.2px #444">f<span style="font-size:6px">x</span></div>
<div style="position:absolute;left:546.6px;top:100.5px;width:249px;height:26.2px;background:#fff;border:1px solid #d8d8d8;box-sizing:border-box"></div>
<svg style="position:absolute;left:787px;top:105.5px;" width="7" height="4" viewBox="0 0 7 4"><path d="M0.9 3.4 L3.5 0.9 L6.1 3.4" fill="none" stroke="#333" stroke-width="1.2"/></svg>
<div style="position:absolute;left:0px;top:132.5px;width:386px;height:13.5px;background:#e9e9e9"></div>
<div style="position:absolute;left:202.4px;top:132.5px;width:91.6px;height:13.5px;background:#d3d3d3"></div>
<svg style="position:absolute;left:8px;top:135.5px;" width="10" height="10" viewBox="0 0 10 10"><path d="M9.6 0.3 V9.2 H0.5 z" fill="#b9b9b9"/></svg>
<div class="t" style="left:62.31px;top:135.00px;font-size:9.4px;line-height:10.51px;color:#3b3b3b;transform-origin:3.39px 0;-webkit-text-stroke:0.25px #3b3b3b">C</div>
<div style="position:absolute;left:110.5px;top:133.5px;width:1px;height:12.5px;background:#d2d2d2"></div>
<div class="t" style="left:153.51px;top:135.00px;font-size:9.4px;line-height:10.51px;color:#3b3b3b;transform-origin:3.39px 0;-webkit-text-stroke:0.25px #3b3b3b">D</div>
<div style="position:absolute;left:201.9px;top:133.5px;width:1px;height:12.5px;background:#d2d2d2"></div>
<div class="t" style="left:245.27px;top:135.00px;font-size:9.4px;line-height:10.51px;color:#2a5a41;transform:scaleX(0.6699);transform-origin:3.13px 0;-webkit-text-stroke:0.25px #2a5a41">E</div>
<div style="position:absolute;left:293.5px;top:133.5px;width:1px;height:12.5px;background:#d2d2d2"></div>
<div class="t" style="left:337.33px;top:135.00px;font-size:9.4px;line-height:10.51px;color:#3b3b3b;transform-origin:2.87px 0;-webkit-text-stroke:0.25px #3b3b3b">F</div>
<div style="position:absolute;left:19.2px;top:132.5px;width:1.2px;height:13.5px;background:#d2d2d2"></div>
<div style="position:absolute;left:0px;top:145.4px;width:386px;height:0.8px;background:#d2d2d2"></div>
<div style="position:absolute;left:202.4px;top:145.2px;width:91.6px;height:1.5px;background:#1f6b43"></div>
<div style="position:absolute;left:20px;top:146px;width:366px;height:251px;background:#fff"></div>
<div style="position:absolute;left:0px;top:146px;width:19.5px;height:251px;background:#e9e9e9"></div>
<div style="position:absolute;left:0;top:0;width:386px;height:397px;overflow:hidden">
<div style="position:absolute;left:20px;top:159.57px;width:366px;height:1px;background:#e6e6e6"></div>
<div style="position:absolute;left:0px;top:159.57px;width:19.5px;height:1px;background:#d2d2d2"></div>
<div style="position:absolute;left:20px;top:173.64px;width:366px;height:1px;background:#e6e6e6"></div>
<div style="position:absolute;left:0px;top:173.64px;width:19.5px;height:1px;background:#d2d2d2"></div>
<div style="position:absolute;left:20px;top:187.70999999999998px;width:366px;height:1px;background:#e6e6e6"></div>
<div style="position:absolute;left:0px;top:187.70999999999998px;width:19.5px;height:1px;background:#d2d2d2"></div>
<div style="position:absolute;left:20px;top:201.78px;width:366px;height:1px;background:#e6e6e6"></div>
<div style="position:absolute;left:0px;top:201.78px;width:19.5px;height:1px;background:#d2d2d2"></div>
<div style="position:absolute;left:20px;top:215.85px;width:366px;height:1px;background:#e6e6e6"></div>
<div style="position:absolute;left:0px;top:215.85px;width:19.5px;height:1px;background:#d2d2d2"></div>
<div style="position:absolute;left:20px;top:229.92px;width:366px;height:1px;background:#e6e6e6"></div>
<div style="position:absolute;left:0px;top:229.92px;width:19.5px;height:1px;background:#d2d2d2"></div>
<div style="position:absolute;left:20px;top:243.99px;width:366px;height:1px;background:#e6e6e6"></div>
<div style="position:absolute;left:0px;top:243.99px;width:19.5px;height:1px;background:#d2d2d2"></div>
<div style="position:absolute;left:20px;top:258.06px;width:366px;height:1px;background:#e6e6e6"></div>
<div style="position:absolute;left:0px;top:258.06px;width:19.5px;height:1px;background:#d2d2d2"></div>
<div style="position:absolute;left:20px;top:272.13px;width:366px;height:1px;background:#e6e6e6"></div>
<div style="position:absolute;left:0px;top:272.13px;width:19.5px;height:1px;background:#d2d2d2"></div>
<div style="position:absolute;left:20px;top:286.2px;width:366px;height:1px;background:#e6e6e6"></div>
<div style="position:absolute;left:0px;top:286.2px;width:19.5px;height:1px;background:#d2d2d2"></div>
<div style="position:absolute;left:20px;top:300.27px;width:366px;height:1px;background:#e6e6e6"></div>
<div style="position:absolute;left:0px;top:300.27px;width:19.5px;height:1px;background:#d2d2d2"></div>
<div style="position:absolute;left:20px;top:314.34px;width:366px;height:1px;background:#e6e6e6"></div>
<div style="position:absolute;left:0px;top:314.34px;width:19.5px;height:1px;background:#d2d2d2"></div>
<div style="position:absolute;left:20px;top:328.41px;width:366px;height:1px;background:#e6e6e6"></div>
<div style="position:absolute;left:0px;top:328.41px;width:19.5px;height:1px;background:#d2d2d2"></div>
<div style="position:absolute;left:20px;top:342.47999999999996px;width:366px;height:1px;background:#e6e6e6"></div>
<div style="position:absolute;left:0px;top:342.47999999999996px;width:19.5px;height:1px;background:#d2d2d2"></div>
<div style="position:absolute;left:20px;top:356.55px;width:366px;height:1px;background:#e6e6e6"></div>
<div style="position:absolute;left:0px;top:356.55px;width:19.5px;height:1px;background:#d2d2d2"></div>
<div style="position:absolute;left:0px;top:357.05px;width:19.5px;height:14.07px;background:#d3d3d3"></div>
<div style="position:absolute;left:20px;top:370.62px;width:366px;height:1px;background:#e6e6e6"></div>
<div style="position:absolute;left:0px;top:370.62px;width:19.5px;height:1px;background:#d2d2d2"></div>
<div style="position:absolute;left:20px;top:384.69px;width:366px;height:1px;background:#e6e6e6"></div>
<div style="position:absolute;left:0px;top:384.69px;width:19.5px;height:1px;background:#d2d2d2"></div>
<div style="position:absolute;left:20px;top:398.76px;width:366px;height:1px;background:#e6e6e6"></div>
<div style="position:absolute;left:0px;top:398.76px;width:19.5px;height:1px;background:#d2d2d2"></div>
<div style="position:absolute;left:110.5px;top:146px;width:1px;height:251px;background:#e6e6e6"></div>
<div style="position:absolute;left:201.9px;top:146px;width:1px;height:251px;background:#e6e6e6"></div>
<div style="position:absolute;left:293.5px;top:146px;width:1px;height:251px;background:#e6e6e6"></div>
<div style="position:absolute;left:19.2px;top:146px;width:1.2px;height:251px;background:#d2d2d2"></div>
<div style="position:absolute;left:18.6px;top:357.05px;width:1.4px;height:14.07px;background:#1f6b43"></div>
<div class="t" style="left:7.69px;top:150.00px;font-size:9.4px;line-height:10.51px;color:#3b3b3b;transform-origin:2.61px 0;-webkit-text-stroke:0.25px #3b3b3b">1</div>
<div class="t" style="left:22.00px;top:150.00px;font-size:9.5px;line-height:10.62px;color:#1e1e1e;transform-origin:0 0;color:#1a1a1a;-webkit-text-stroke:0.3px #1a1a1a">Mã Tỉnh/TP</div>
<div class="t" style="left:113.30px;top:150.00px;font-size:9.5px;line-height:10.62px;color:#1e1e1e;transform-origin:0 0;color:#1a1a1a;-webkit-text-stroke:0.3px #1a1a1a">Tên Phường/ Xã</div>
<div class="t" style="left:204.50px;top:150.00px;font-size:9.5px;line-height:10.62px;color:#1e1e1e;transform-origin:0 0;color:#1a1a1a;-webkit-text-stroke:0.3px #1a1a1a">Tên Quận/ Huyện</div>
<div class="t" style="left:296.00px;top:150.00px;font-size:9.5px;line-height:10.62px;color:#1e1e1e;transform-origin:0 0;color:#1a1a1a;-webkit-text-stroke:0.3px #1a1a1a">Tên Tỉnh/TP</div>
<div class="t" style="left:7.69px;top:164.00px;font-size:9.4px;line-height:10.51px;color:#3b3b3b;transform-origin:2.61px 0;-webkit-text-stroke:0.25px #3b3b3b">2</div>
<div class="t" style="left:98.44px;top:164.00px;font-size:9.5px;line-height:10.62px;color:#1e1e1e;transform-origin:10.56px 0;color:#1a1a1a;-webkit-text-stroke:0.3px #1a1a1a">96</div>
<div class="t" style="left:113.30px;top:164.00px;font-size:9.5px;line-height:10.62px;color:#1e1e1e;transform-origin:0 0;color:#1a1a1a;-webkit-text-stroke:0.3px #1a1a1a">Xã Tân Ân</div>
<div class="t" style="left:204.50px;top:164.00px;font-size:9.5px;line-height:10.62px;color:#1e1e1e;transform-origin:0 0;color:#1a1a1a;-webkit-text-stroke:0.3px #1a1a1a">Huyện Ngọc Hiển</div>
<div class="t" style="left:296.00px;top:164.00px;font-size:9.5px;line-height:10.62px;color:#1e1e1e;transform-origin:0 0;color:#1a1a1a;-webkit-text-stroke:0.3px #1a1a1a">Tỉnh Cà Mau</div>
<div class="t" style="left:7.69px;top:178.00px;font-size:9.4px;line-height:10.51px;color:#3b3b3b;transform-origin:2.61px 0;-webkit-text-stroke:0.25px #3b3b3b">3</div>
<div class="t" style="left:98.44px;top:178.00px;font-size:9.5px;line-height:10.62px;color:#1e1e1e;transform-origin:10.56px 0;color:#1a1a1a;-webkit-text-stroke:0.3px #1a1a1a">96</div>
<div class="t" style="left:113.30px;top:178.00px;font-size:9.5px;line-height:10.62px;color:#1e1e1e;transform-origin:0 0;color:#1a1a1a;-webkit-text-stroke:0.3px #1a1a1a">Thị trấn Rạch Gốc</div>
<div class="t" style="left:204.50px;top:178.00px;font-size:9.5px;line-height:10.62px;color:#1e1e1e;transform-origin:0 0;color:#1a1a1a;-webkit-text-stroke:0.3px #1a1a1a">Huyện Ngọc Hiển</div>
<div class="t" style="left:296.00px;top:178.00px;font-size:9.5px;line-height:10.62px;color:#1e1e1e;transform-origin:0 0;color:#1a1a1a;-webkit-text-stroke:0.3px #1a1a1a">Tỉnh Cà Mau</div>
<div class="t" style="left:7.69px;top:192.00px;font-size:9.4px;line-height:10.51px;color:#3b3b3b;transform-origin:2.61px 0;-webkit-text-stroke:0.25px #3b3b3b">4</div>
<div class="t" style="left:98.44px;top:192.00px;font-size:9.5px;line-height:10.62px;color:#1e1e1e;transform-origin:10.56px 0;color:#1a1a1a;-webkit-text-stroke:0.3px #1a1a1a">96</div>
<div class="t" style="left:113.30px;top:192.00px;font-size:9.5px;line-height:10.62px;color:#1e1e1e;transform-origin:0 0;color:#1a1a1a;-webkit-text-stroke:0.3px #1a1a1a">Xã Viên An</div>
<div class="t" style="left:204.50px;top:192.00px;font-size:9.5px;line-height:10.62px;color:#1e1e1e;transform-origin:0 0;color:#1a1a1a;-webkit-text-stroke:0.3px #1a1a1a">Huyện Ngọc Hiển</div>
<div class="t" style="left:296.00px;top:192.00px;font-size:9.5px;line-height:10.62px;color:#1e1e1e;transform-origin:0 0;color:#1a1a1a;-webkit-text-stroke:0.3px #1a1a1a">Tỉnh Cà Mau</div>
<div class="t" style="left:7.69px;top:206.00px;font-size:9.4px;line-height:10.51px;color:#3b3b3b;transform-origin:2.61px 0;-webkit-text-stroke:0.25px #3b3b3b">5</div>
<div class="t" style="left:98.44px;top:206.00px;font-size:9.5px;line-height:10.62px;color:#1e1e1e;transform-origin:10.56px 0;color:#1a1a1a;-webkit-text-stroke:0.3px #1a1a1a">96</div>
<div class="t" style="left:113.30px;top:206.00px;font-size:9.5px;line-height:10.62px;color:#1e1e1e;transform-origin:0 0;color:#1a1a1a;-webkit-text-stroke:0.3px #1a1a1a">Xã Viên An Đông</div>
<div class="t" style="left:204.50px;top:206.00px;font-size:9.5px;line-height:10.62px;color:#1e1e1e;transform-origin:0 0;color:#1a1a1a;-webkit-text-stroke:0.3px #1a1a1a">Huyện Ngọc Hiển</div>
<div class="t" style="left:296.00px;top:206.00px;font-size:9.5px;line-height:10.62px;color:#1e1e1e;transform-origin:0 0;color:#1a1a1a;-webkit-text-stroke:0.3px #1a1a1a">Tỉnh Cà Mau</div>
<div class="t" style="left:7.69px;top:220.00px;font-size:9.4px;line-height:10.51px;color:#3b3b3b;transform-origin:2.61px 0;-webkit-text-stroke:0.25px #3b3b3b">6</div>
<div class="t" style="left:98.44px;top:220.00px;font-size:9.5px;line-height:10.62px;color:#1e1e1e;transform-origin:10.56px 0;color:#1a1a1a;-webkit-text-stroke:0.3px #1a1a1a">96</div>
<div class="t" style="left:113.30px;top:220.00px;font-size:9.5px;line-height:10.62px;color:#1e1e1e;transform-origin:0 0;color:#1a1a1a;-webkit-text-stroke:0.3px #1a1a1a">Xã Tân Ân Tây</div>
<div class="t" style="left:204.50px;top:220.00px;font-size:9.5px;line-height:10.62px;color:#1e1e1e;transform-origin:0 0;color:#1a1a1a;-webkit-text-stroke:0.3px #1a1a1a">Huyện Ngọc Hiển</div>
<div class="t" style="left:296.00px;top:220.00px;font-size:9.5px;line-height:10.62px;color:#1e1e1e;transform-origin:0 0;color:#1a1a1a;-webkit-text-stroke:0.3px #1a1a1a">Tỉnh Cà Mau</div>
<div class="t" style="left:7.69px;top:234.00px;font-size:9.4px;line-height:10.51px;color:#3b3b3b;transform-origin:2.61px 0;-webkit-text-stroke:0.25px #3b3b3b">7</div>
<div class="t" style="left:98.44px;top:234.00px;font-size:9.5px;line-height:10.62px;color:#1e1e1e;transform-origin:10.56px 0;color:#1a1a1a;-webkit-text-stroke:0.3px #1a1a1a">96</div>
<div class="t" style="left:113.30px;top:234.00px;font-size:9.5px;line-height:10.62px;color:#1e1e1e;transform-origin:0 0;color:#1a1a1a;-webkit-text-stroke:0.3px #1a1a1a">Xã Tam Giang Tây</div>
<div class="t" style="left:204.50px;top:234.00px;font-size:9.5px;line-height:10.62px;color:#1e1e1e;transform-origin:0 0;color:#1a1a1a;-webkit-text-stroke:0.3px #1a1a1a">Huyện Ngọc Hiển</div>
<div class="t" style="left:296.00px;top:234.00px;font-size:9.5px;line-height:10.62px;color:#1e1e1e;transform-origin:0 0;color:#1a1a1a;-webkit-text-stroke:0.3px #1a1a1a">Tỉnh Cà Mau</div>
<div class="t" style="left:7.69px;top:248.00px;font-size:9.4px;line-height:10.51px;color:#3b3b3b;transform-origin:2.61px 0;-webkit-text-stroke:0.25px #3b3b3b">8</div>
<div class="t" style="left:98.44px;top:248.00px;font-size:9.5px;line-height:10.62px;color:#1e1e1e;transform-origin:10.56px 0;color:#1a1a1a;-webkit-text-stroke:0.3px #1a1a1a">96</div>
<div class="t" style="left:113.30px;top:248.00px;font-size:9.5px;line-height:10.62px;color:#1e1e1e;transform-origin:0 0;color:#1a1a1a;-webkit-text-stroke:0.3px #1a1a1a">Xã Phú Mỹ</div>
<div class="t" style="left:204.50px;top:248.00px;font-size:9.5px;line-height:10.62px;color:#1e1e1e;transform-origin:0 0;color:#1a1a1a;-webkit-text-stroke:0.3px #1a1a1a">Huyện Phú Tân</div>
<div class="t" style="left:296.00px;top:248.00px;font-size:9.5px;line-height:10.62px;color:#1e1e1e;transform-origin:0 0;color:#1a1a1a;-webkit-text-stroke:0.3px #1a1a1a">Tỉnh Cà Mau</div>
<div class="t" style="left:7.69px;top:262.00px;font-size:9.4px;line-height:10.51px;color:#3b3b3b;transform-origin:2.61px 0;-webkit-text-stroke:0.25px #3b3b3b">9</div>
<div class="t" style="left:98.44px;top:262.00px;font-size:9.5px;line-height:10.62px;color:#1e1e1e;transform-origin:10.56px 0;color:#1a1a1a;-webkit-text-stroke:0.3px #1a1a1a">96</div>
<div class="t" style="left:113.30px;top:262.00px;font-size:9.5px;line-height:10.62px;color:#1e1e1e;transform-origin:0 0;color:#1a1a1a;-webkit-text-stroke:0.3px #1a1a1a">Xã Phú Thuận</div>
<div class="t" style="left:204.50px;top:262.00px;font-size:9.5px;line-height:10.62px;color:#1e1e1e;transform-origin:0 0;color:#1a1a1a;-webkit-text-stroke:0.3px #1a1a1a">Huyện Phú Tân</div>
<div class="t" style="left:296.00px;top:262.00px;font-size:9.5px;line-height:10.62px;color:#1e1e1e;transform-origin:0 0;color:#1a1a1a;-webkit-text-stroke:0.3px #1a1a1a">Tỉnh Cà Mau</div>
<div class="t" style="left:5.07px;top:276.00px;font-size:9.4px;line-height:10.51px;color:#3b3b3b;transform-origin:5.23px 0;-webkit-text-stroke:0.25px #3b3b3b">10</div>
<div class="t" style="left:98.44px;top:276.00px;font-size:9.5px;line-height:10.62px;color:#1e1e1e;transform-origin:10.56px 0;color:#1a1a1a;-webkit-text-stroke:0.3px #1a1a1a">96</div>
<div class="t" style="left:113.30px;top:276.00px;font-size:9.5px;line-height:10.62px;color:#1e1e1e;transform-origin:0 0;color:#1a1a1a;-webkit-text-stroke:0.3px #1a1a1a">Xã Phú Tân</div>
<div class="t" style="left:204.50px;top:276.00px;font-size:9.5px;line-height:10.62px;color:#1e1e1e;transform-origin:0 0;color:#1a1a1a;-webkit-text-stroke:0.3px #1a1a1a">Huyện Phú Tân</div>
<div class="t" style="left:296.00px;top:276.00px;font-size:9.5px;line-height:10.62px;color:#1e1e1e;transform-origin:0 0;color:#1a1a1a;-webkit-text-stroke:0.3px #1a1a1a">Tỉnh Cà Mau</div>
<div class="t" style="left:5.42px;top:290.00px;font-size:9.4px;line-height:10.51px;color:#3b3b3b;transform-origin:4.88px 0;-webkit-text-stroke:0.25px #3b3b3b">11</div>
<div class="t" style="left:98.44px;top:290.00px;font-size:9.5px;line-height:10.62px;color:#1e1e1e;transform-origin:10.56px 0;color:#1a1a1a;-webkit-text-stroke:0.3px #1a1a1a">96</div>
<div class="t" style="left:113.30px;top:290.00px;font-size:9.5px;line-height:10.62px;color:#1e1e1e;transform-origin:0 0;color:#1a1a1a;-webkit-text-stroke:0.3px #1a1a1a">Xã Tân Hải</div>
<div class="t" style="left:204.50px;top:290.00px;font-size:9.5px;line-height:10.62px;color:#1e1e1e;transform-origin:0 0;color:#1a1a1a;-webkit-text-stroke:0.3px #1a1a1a">Huyện Phú Tân</div>
<div class="t" style="left:296.00px;top:290.00px;font-size:9.5px;line-height:10.62px;color:#1e1e1e;transform-origin:0 0;color:#1a1a1a;-webkit-text-stroke:0.3px #1a1a1a">Tỉnh Cà Mau</div>
<div class="t" style="left:5.07px;top:304.00px;font-size:9.4px;line-height:10.51px;color:#3b3b3b;transform-origin:5.23px 0;-webkit-text-stroke:0.25px #3b3b3b">12</div>
<div class="t" style="left:98.44px;top:304.00px;font-size:9.5px;line-height:10.62px;color:#1e1e1e;transform-origin:10.56px 0;color:#1a1a1a;-webkit-text-stroke:0.3px #1a1a1a">96</div>
<div class="t" style="left:113.30px;top:304.00px;font-size:9.5px;line-height:10.62px;color:#1e1e1e;transform-origin:0 0;color:#1a1a1a;-webkit-text-stroke:0.3px #1a1a1a">Xã Việt Thắng</div>
<div class="t" style="left:204.50px;top:304.00px;font-size:9.5px;line-height:10.62px;color:#1e1e1e;transform-origin:0 0;color:#1a1a1a;-webkit-text-stroke:0.3px #1a1a1a">Huyện Phú Tân</div>
<div class="t" style="left:296.00px;top:304.00px;font-size:9.5px;line-height:10.62px;color:#1e1e1e;transform-origin:0 0;color:#1a1a1a;-webkit-text-stroke:0.3px #1a1a1a">Tỉnh Cà Mau</div>
<div class="t" style="left:5.07px;top:319.00px;font-size:9.4px;line-height:10.51px;color:#3b3b3b;transform-origin:5.23px 0;-webkit-text-stroke:0.25px #3b3b3b">13</div>
<div class="t" style="left:98.44px;top:319.00px;font-size:9.5px;line-height:10.62px;color:#1e1e1e;transform-origin:10.56px 0;color:#1a1a1a;-webkit-text-stroke:0.3px #1a1a1a">96</div>
<div class="t" style="left:113.30px;top:319.00px;font-size:9.5px;line-height:10.62px;color:#1e1e1e;transform-origin:0 0;color:#1a1a1a;-webkit-text-stroke:0.3px #1a1a1a">Xã Rạch Chèo</div>
<div class="t" style="left:204.50px;top:319.00px;font-size:9.5px;line-height:10.62px;color:#1e1e1e;transform-origin:0 0;color:#1a1a1a;-webkit-text-stroke:0.3px #1a1a1a">Huyện Phú Tân</div>
<div class="t" style="left:296.00px;top:319.00px;font-size:9.5px;line-height:10.62px;color:#1e1e1e;transform-origin:0 0;color:#1a1a1a;-webkit-text-stroke:0.3px #1a1a1a">Tỉnh Cà Mau</div>
<div class="t" style="left:5.07px;top:333.00px;font-size:9.4px;line-height:10.51px;color:#3b3b3b;transform-origin:5.23px 0;-webkit-text-stroke:0.25px #3b3b3b">14</div>
<div class="t" style="left:98.44px;top:333.00px;font-size:9.5px;line-height:10.62px;color:#1e1e1e;transform-origin:10.56px 0;color:#1a1a1a;-webkit-text-stroke:0.3px #1a1a1a">96</div>
<div class="t" style="left:113.30px;top:333.00px;font-size:9.5px;line-height:10.62px;color:#1e1e1e;transform-origin:0 0;color:#1a1a1a;-webkit-text-stroke:0.3px #1a1a1a">Xã Việt Khái</div>
<div class="t" style="left:204.50px;top:333.00px;font-size:9.5px;line-height:10.62px;color:#1e1e1e;transform-origin:0 0;color:#1a1a1a;-webkit-text-stroke:0.3px #1a1a1a">Huyện Phú Tân</div>
<div class="t" style="left:296.00px;top:333.00px;font-size:9.5px;line-height:10.62px;color:#1e1e1e;transform-origin:0 0;color:#1a1a1a;-webkit-text-stroke:0.3px #1a1a1a">Tỉnh Cà Mau</div>
<div class="t" style="left:5.07px;top:347.00px;font-size:9.4px;line-height:10.51px;color:#3b3b3b;transform-origin:5.23px 0;-webkit-text-stroke:0.25px #3b3b3b">15</div>
<div class="t" style="left:98.44px;top:347.00px;font-size:9.5px;line-height:10.62px;color:#1e1e1e;transform-origin:10.56px 0;color:#1a1a1a;-webkit-text-stroke:0.3px #1a1a1a">96</div>
<div class="t" style="left:113.30px;top:347.00px;font-size:9.5px;line-height:10.62px;color:#1e1e1e;transform-origin:0 0;color:#1a1a1a;-webkit-text-stroke:0.3px #1a1a1a">Thị trấn Cái Đôi Vàm</div>
<div class="t" style="left:204.50px;top:347.00px;font-size:9.5px;line-height:10.62px;color:#1e1e1e;transform-origin:0 0;color:#1a1a1a;-webkit-text-stroke:0.3px #1a1a1a">Huyện Phú Tân</div>
<div class="t" style="left:296.00px;top:347.00px;font-size:9.5px;line-height:10.62px;color:#1e1e1e;transform-origin:0 0;color:#1a1a1a;-webkit-text-stroke:0.3px #1a1a1a">Tỉnh Cà Mau</div>
<div class="t" style="left:5.07px;top:361.00px;font-size:9.4px;line-height:10.51px;color:#2a5a41;transform-origin:5.23px 0;-webkit-text-stroke:0.25px #2a5a41">16</div>
<div class="t" style="left:98.44px;top:361.00px;font-size:9.5px;line-height:10.62px;color:#1e1e1e;transform-origin:10.56px 0;color:#1a1a1a;-webkit-text-stroke:0.3px #1a1a1a">96</div>
<div class="t" style="left:113.30px;top:361.00px;font-size:9.5px;line-height:10.62px;color:#1e1e1e;transform-origin:0 0;color:#1a1a1a;-webkit-text-stroke:0.3px #1a1a1a">Xã Tân Hưng Tây</div>
<div class="t" style="left:204.50px;top:361.00px;font-size:9.5px;line-height:10.62px;color:#1e1e1e;transform-origin:0 0;color:#1a1a1a;-webkit-text-stroke:0.3px #1a1a1a">Huyện Phú Tân</div>
<div class="t" style="left:296.00px;top:361.00px;font-size:9.5px;line-height:10.62px;color:#1e1e1e;transform-origin:0 0;color:#1a1a1a;-webkit-text-stroke:0.3px #1a1a1a">Tỉnh Cà Mau</div>
<div class="t" style="left:5.07px;top:375.00px;font-size:9.4px;line-height:10.51px;color:#3b3b3b;transform-origin:5.23px 0;-webkit-text-stroke:0.25px #3b3b3b">17</div>
<div class="t" style="left:98.44px;top:375.00px;font-size:9.5px;line-height:10.62px;color:#1e1e1e;transform-origin:10.56px 0;color:#1a1a1a;-webkit-text-stroke:0.3px #1a1a1a">96</div>
<div class="t" style="left:113.30px;top:375.00px;font-size:9.5px;line-height:10.62px;color:#1e1e1e;transform-origin:0 0;color:#1a1a1a;-webkit-text-stroke:0.3px #1a1a1a">Xã Lâm Hải</div>
<div class="t" style="left:204.50px;top:375.00px;font-size:9.5px;line-height:10.62px;color:#1e1e1e;transform-origin:0 0;color:#1a1a1a;-webkit-text-stroke:0.3px #1a1a1a">Huyện Năm Căn</div>
<div class="t" style="left:296.00px;top:375.00px;font-size:9.5px;line-height:10.62px;color:#1e1e1e;transform-origin:0 0;color:#1a1a1a;-webkit-text-stroke:0.3px #1a1a1a">Tỉnh Cà Mau</div>
<div class="t" style="left:5.07px;top:389.00px;font-size:9.4px;line-height:10.51px;color:#3b3b3b;transform-origin:5.23px 0;-webkit-text-stroke:0.25px #3b3b3b">18</div>
<div class="t" style="left:98.44px;top:389.00px;font-size:9.5px;line-height:10.62px;color:#1e1e1e;transform-origin:10.56px 0;color:#1a1a1a;-webkit-text-stroke:0.3px #1a1a1a">96</div>
<div class="t" style="left:113.30px;top:389.00px;font-size:9.5px;line-height:10.62px;color:#1e1e1e;transform-origin:0 0;color:#1a1a1a;-webkit-text-stroke:0.3px #1a1a1a">Thi Trấn Năm Căn</div>
<div class="t" style="left:204.50px;top:389.00px;font-size:9.5px;line-height:10.62px;color:#1e1e1e;transform-origin:0 0;color:#1a1a1a;-webkit-text-stroke:0.3px #1a1a1a">Huyện Năm Căn</div>
<div class="t" style="left:296.00px;top:389.00px;font-size:9.5px;line-height:10.62px;color:#1e1e1e;transform-origin:0 0;color:#1a1a1a;-webkit-text-stroke:0.3px #1a1a1a">Tỉnh Cà Mau</div>
<div style="position:absolute;left:201.4px;top:356.45px;width:93.2px;height:15.67px;border:1.6px solid #217346;box-sizing:border-box"></div>
<div style="position:absolute;left:291.8px;top:369.32px;width:3.6px;height:3.6px;background:#217346;outline:0.6px solid #fff"></div>
</div>
<div style="position:absolute;left:386px;top:132.5px;width:12px;height:264.5px;background:#dedede"></div>
<div style="position:absolute;left:386px;top:132.5px;width:2.4px;height:264.5px;background:#e6e6e6"></div>
<div style="position:absolute;left:388.4px;top:134.7px;width:8.2px;height:7.3px;background:#fff"></div>
<svg style="position:absolute;left:390.5px;top:137px;" width="4" height="2.5" viewBox="0 0 4 2.5"><path d="M0 2.5 L2 0 L4 2.5 z" fill="#444"/></svg>
<div style="position:absolute;left:388.4px;top:142.5px;width:8.2px;height:9.6px;background:#fff"></div>
<div style="position:absolute;left:388.4px;top:389.6px;width:8.2px;height:7.2px;background:#fff"></div>
<svg style="position:absolute;left:390.5px;top:391.9px;" width="4" height="2.5" viewBox="0 0 4 2.5"><path d="M0 0 L2 2.5 L4 0 z" fill="#444"/></svg>
<div style="position:absolute;left:397.5px;top:19px;width:1px;height:408px;background:#f2f4f3"></div>
<div style="position:absolute;left:400px;top:132.5px;width:386px;height:11.5px;background:#e9e9e9"></div>
<svg style="position:absolute;left:404px;top:135.5px;" width="10" height="8" viewBox="0 0 10 8"><path d="M9.4 0.3 V7.6 H0.8 z" fill="#b9b9b9"/></svg>
<div style="position:absolute;left:400px;top:144px;width:386px;height:253px;background:#fff"></div>
<div style="position:absolute;left:400px;top:144px;width:14.8px;height:253px;background:#e9e9e9"></div>
<div style="position:absolute;left:400px;top:0;width:386px;height:397px;overflow:hidden">
<div style="position:absolute;left:15px;top:155.21px;width:371px;height:1px;background:#e0e0e0"></div>
<div style="position:absolute;left:0px;top:155.21px;width:14.8px;height:1px;background:#d2d2d2"></div>
<div style="position:absolute;left:15px;top:166.92000000000002px;width:371px;height:1px;background:#e0e0e0"></div>
<div style="position:absolute;left:0px;top:166.92000000000002px;width:14.8px;height:1px;background:#d2d2d2"></div>
<div style="position:absolute;left:15px;top:178.63000000000002px;width:371px;height:1px;background:#e0e0e0"></div>
<div style="position:absolute;left:0px;top:178.63000000000002px;width:14.8px;height:1px;background:#d2d2d2"></div>
<div style="position:absolute;left:15px;top:190.34px;width:371px;height:1px;background:#e0e0e0"></div>
<div style="position:absolute;left:0px;top:190.34px;width:14.8px;height:1px;background:#d2d2d2"></div>
<div style="position:absolute;left:15px;top:202.05px;width:371px;height:1px;background:#e0e0e0"></div>
<div style="position:absolute;left:0px;top:202.05px;width:14.8px;height:1px;background:#d2d2d2"></div>
<div style="position:absolute;left:15px;top:213.76000000000002px;width:371px;height:1px;background:#e0e0e0"></div>
<div style="position:absolute;left:0px;top:213.76000000000002px;width:14.8px;height:1px;background:#d2d2d2"></div>
<div style="position:absolute;left:15px;top:225.47px;width:371px;height:1px;background:#e0e0e0"></div>
<div style="position:absolute;left:0px;top:225.47px;width:14.8px;height:1px;background:#d2d2d2"></div>
<div style="position:absolute;left:15px;top:237.18px;width:371px;height:1px;background:#e0e0e0"></div>
<div style="position:absolute;left:0px;top:237.18px;width:14.8px;height:1px;background:#d2d2d2"></div>
<div style="position:absolute;left:15px;top:248.89000000000001px;width:371px;height:1px;background:#e0e0e0"></div>
<div style="position:absolute;left:0px;top:248.89000000000001px;width:14.8px;height:1px;background:#d2d2d2"></div>
<div style="position:absolute;left:15px;top:260.6px;width:371px;height:1px;background:#e0e0e0"></div>
<div style="position:absolute;left:0px;top:260.6px;width:14.8px;height:1px;background:#d2d2d2"></div>
<div style="position:absolute;left:15px;top:272.31px;width:371px;height:1px;background:#e0e0e0"></div>
<div style="position:absolute;left:0px;top:272.31px;width:14.8px;height:1px;background:#d2d2d2"></div>
<div style="position:absolute;left:15px;top:284.02px;width:371px;height:1px;background:#e0e0e0"></div>
<div style="position:absolute;left:0px;top:284.02px;width:14.8px;height:1px;background:#d2d2d2"></div>
<div style="position:absolute;left:15px;top:295.72999999999996px;width:371px;height:1px;background:#e0e0e0"></div>
<div style="position:absolute;left:0px;top:295.72999999999996px;width:14.8px;height:1px;background:#d2d2d2"></div>
<div style="position:absolute;left:15px;top:307.44px;width:371px;height:1px;background:#e0e0e0"></div>
<div style="position:absolute;left:0px;top:307.44px;width:14.8px;height:1px;background:#d2d2d2"></div>
<div style="position:absolute;left:15px;top:319.15px;width:371px;height:1px;background:#e0e0e0"></div>
<div style="position:absolute;left:0px;top:319.15px;width:14.8px;height:1px;background:#d2d2d2"></div>
<div style="position:absolute;left:15px;top:330.85999999999996px;width:371px;height:1px;background:#e0e0e0"></div>
<div style="position:absolute;left:0px;top:330.85999999999996px;width:14.8px;height:1px;background:#d2d2d2"></div>
<div style="position:absolute;left:15px;top:342.57px;width:371px;height:1px;background:#e0e0e0"></div>
<div style="position:absolute;left:0px;top:342.57px;width:14.8px;height:1px;background:#d2d2d2"></div>
<div style="position:absolute;left:15px;top:354.28000000000003px;width:371px;height:1px;background:#e0e0e0"></div>
<div style="position:absolute;left:0px;top:354.28000000000003px;width:14.8px;height:1px;background:#d2d2d2"></div>
<div style="position:absolute;left:15px;top:365.99px;width:371px;height:1px;background:#e0e0e0"></div>
<div style="position:absolute;left:0px;top:365.99px;width:14.8px;height:1px;background:#d2d2d2"></div>
<div style="position:absolute;left:15px;top:377.7px;width:371px;height:1px;background:#e0e0e0"></div>
<div style="position:absolute;left:0px;top:377.7px;width:14.8px;height:1px;background:#d2d2d2"></div>
<div style="position:absolute;left:15px;top:389.41px;width:371px;height:1px;background:#e0e0e0"></div>
<div style="position:absolute;left:0px;top:389.41px;width:14.8px;height:1px;background:#d2d2d2"></div>
<div style="position:absolute;left:15px;top:401.12px;width:371px;height:1px;background:#e0e0e0"></div>
<div style="position:absolute;left:0px;top:401.12px;width:14.8px;height:1px;background:#d2d2d2"></div>
<div style="position:absolute;left:51.8px;top:144px;width:1px;height:253px;background:#e0e0e0"></div>
<div style="position:absolute;left:51.8px;top:134px;width:1px;height:10px;background:#d2d2d2"></div>
<div style="position:absolute;left:89.3px;top:144px;width:1px;height:253px;background:#e0e0e0"></div>
<div style="position:absolute;left:89.3px;top:134px;width:1px;height:10px;background:#d2d2d2"></div>
<div style="position:absolute;left:126.8px;top:144px;width:1px;height:253px;background:#e0e0e0"></div>
<div style="position:absolute;left:126.8px;top:134px;width:1px;height:10px;background:#d2d2d2"></div>
<div style="position:absolute;left:164.3px;top:144px;width:1px;height:253px;background:#e0e0e0"></div>
<div style="position:absolute;left:164.3px;top:134px;width:1px;height:10px;background:#d2d2d2"></div>
<div style="position:absolute;left:201.8px;top:144px;width:1px;height:253px;background:#e0e0e0"></div>
<div style="position:absolute;left:201.8px;top:134px;width:1px;height:10px;background:#d2d2d2"></div>
<div style="position:absolute;left:239.3px;top:144px;width:1px;height:253px;background:#e0e0e0"></div>
<div style="position:absolute;left:239.3px;top:134px;width:1px;height:10px;background:#d2d2d2"></div>
<div style="position:absolute;left:276.8px;top:144px;width:1px;height:253px;background:#e0e0e0"></div>
<div style="position:absolute;left:276.8px;top:134px;width:1px;height:10px;background:#d2d2d2"></div>
<div style="position:absolute;left:314.3px;top:144px;width:1px;height:253px;background:#e0e0e0"></div>
<div style="position:absolute;left:314.3px;top:134px;width:1px;height:10px;background:#d2d2d2"></div>
<div style="position:absolute;left:351.8px;top:144px;width:1px;height:253px;background:#e0e0e0"></div>
<div style="position:absolute;left:351.8px;top:134px;width:1px;height:10px;background:#d2d2d2"></div>
<div style="position:absolute;left:389.3px;top:144px;width:1px;height:253px;background:#e0e0e0"></div>
<div style="position:absolute;left:389.3px;top:134px;width:1px;height:10px;background:#d2d2d2"></div>
<div style="position:absolute;left:14.3px;top:132.5px;width:1px;height:264.5px;background:#d2d2d2"></div>
<div style="position:absolute;left:0px;top:143.5px;width:386px;height:0.8px;background:#d2d2d2"></div>
<div class="t" style="left:4.96px;top:147.00px;font-size:8.4px;line-height:9.39px;color:#3b3b3b;transform-origin:2.34px 0;-webkit-text-stroke:0.2px #3b3b3b">1</div>
<div class="t" style="left:4.96px;top:158.00px;font-size:8.4px;line-height:9.39px;color:#3b3b3b;transform-origin:2.34px 0;-webkit-text-stroke:0.2px #3b3b3b">2</div>
<div class="t" style="left:4.96px;top:170.00px;font-size:8.4px;line-height:9.39px;color:#3b3b3b;transform-origin:2.34px 0;-webkit-text-stroke:0.2px #3b3b3b">3</div>
<div class="t" style="left:4.96px;top:182.00px;font-size:8.4px;line-height:9.39px;color:#3b3b3b;transform-origin:2.34px 0;-webkit-text-stroke:0.2px #3b3b3b">4</div>
<div class="t" style="left:4.96px;top:194.00px;font-size:8.4px;line-height:9.39px;color:#3b3b3b;transform-origin:2.34px 0;-webkit-text-stroke:0.2px #3b3b3b">5</div>
<div class="t" style="left:4.96px;top:205.00px;font-size:8.4px;line-height:9.39px;color:#3b3b3b;transform-origin:2.34px 0;-webkit-text-stroke:0.2px #3b3b3b">6</div>
<div class="t" style="left:4.96px;top:217.00px;font-size:8.4px;line-height:9.39px;color:#3b3b3b;transform-origin:2.34px 0;-webkit-text-stroke:0.2px #3b3b3b">7</div>
<div class="t" style="left:4.96px;top:229.00px;font-size:8.4px;line-height:9.39px;color:#3b3b3b;transform-origin:2.34px 0;-webkit-text-stroke:0.2px #3b3b3b">8</div>
<div class="t" style="left:4.96px;top:240.00px;font-size:8.4px;line-height:9.39px;color:#3b3b3b;transform-origin:2.34px 0;-webkit-text-stroke:0.2px #3b3b3b">9</div>
<div class="t" style="left:2.63px;top:252.00px;font-size:8.4px;line-height:9.39px;color:#3b3b3b;transform-origin:4.67px 0;-webkit-text-stroke:0.2px #3b3b3b">10</div>
<div class="t" style="left:2.94px;top:264.00px;font-size:8.4px;line-height:9.39px;color:#3b3b3b;transform-origin:4.36px 0;-webkit-text-stroke:0.2px #3b3b3b">11</div>
<div class="t" style="left:2.63px;top:276.00px;font-size:8.4px;line-height:9.39px;color:#3b3b3b;transform-origin:4.67px 0;-webkit-text-stroke:0.2px #3b3b3b">12</div>
<div class="t" style="left:2.63px;top:287.00px;font-size:8.4px;line-height:9.39px;color:#3b3b3b;transform-origin:4.67px 0;-webkit-text-stroke:0.2px #3b3b3b">13</div>
<div class="t" style="left:2.63px;top:299.00px;font-size:8.4px;line-height:9.39px;color:#3b3b3b;transform-origin:4.67px 0;-webkit-text-stroke:0.2px #3b3b3b">14</div>
<div class="t" style="left:2.63px;top:311.00px;font-size:8.4px;line-height:9.39px;color:#3b3b3b;transform-origin:4.67px 0;-webkit-text-stroke:0.2px #3b3b3b">15</div>
<div class="t" style="left:2.63px;top:322.00px;font-size:8.4px;line-height:9.39px;color:#3b3b3b;transform-origin:4.67px 0;-webkit-text-stroke:0.2px #3b3b3b">16</div>
<div class="t" style="left:2.63px;top:334.00px;font-size:8.4px;line-height:9.39px;color:#3b3b3b;transform-origin:4.67px 0;-webkit-text-stroke:0.2px #3b3b3b">17</div>
<div class="t" style="left:2.63px;top:346.00px;font-size:8.4px;line-height:9.39px;color:#3b3b3b;transform-origin:4.67px 0;-webkit-text-stroke:0.2px #3b3b3b">18</div>
<div class="t" style="left:2.63px;top:357.00px;font-size:8.4px;line-height:9.39px;color:#3b3b3b;transform-origin:4.67px 0;-webkit-text-stroke:0.2px #3b3b3b">19</div>
<div class="t" style="left:2.63px;top:369.00px;font-size:8.4px;line-height:9.39px;color:#3b3b3b;transform-origin:4.67px 0;-webkit-text-stroke:0.2px #3b3b3b">20</div>
<div class="t" style="left:2.63px;top:381.00px;font-size:8.4px;line-height:9.39px;color:#3b3b3b;transform-origin:4.67px 0;-webkit-text-stroke:0.2px #3b3b3b">21</div>
<div class="t" style="left:2.63px;top:393.00px;font-size:8.4px;line-height:9.39px;color:#3b3b3b;transform-origin:4.67px 0;-webkit-text-stroke:0.2px #3b3b3b">22</div>
<div class="t" style="left:30.75px;top:135.00px;font-size:8.4px;line-height:9.39px;color:#3b3b3b;transform-origin:2.80px 0;-webkit-text-stroke:0.2px #3b3b3b">A</div>
<div class="t" style="left:68.25px;top:135.00px;font-size:8.4px;line-height:9.39px;color:#3b3b3b;transform-origin:2.80px 0;-webkit-text-stroke:0.2px #3b3b3b">B</div>
<div class="t" style="left:105.52px;top:135.00px;font-size:8.4px;line-height:9.39px;color:#3b3b3b;transform-origin:3.03px 0;-webkit-text-stroke:0.2px #3b3b3b">C</div>
<div class="t" style="left:143.02px;top:135.00px;font-size:8.4px;line-height:9.39px;color:#3b3b3b;transform-origin:3.03px 0;-webkit-text-stroke:0.2px #3b3b3b">D</div>
<div class="t" style="left:180.75px;top:135.00px;font-size:8.4px;line-height:9.39px;color:#3b3b3b;transform-origin:2.80px 0;-webkit-text-stroke:0.2px #3b3b3b">E</div>
<div class="t" style="left:218.48px;top:135.00px;font-size:8.4px;line-height:9.39px;color:#3b3b3b;transform-origin:2.57px 0;-webkit-text-stroke:0.2px #3b3b3b">F</div>
<div class="t" style="left:255.28px;top:135.00px;font-size:8.4px;line-height:9.39px;color:#3b3b3b;transform-origin:3.27px 0;-webkit-text-stroke:0.2px #3b3b3b">G</div>
<div class="t" style="left:293.02px;top:135.00px;font-size:8.4px;line-height:9.39px;color:#3b3b3b;transform-origin:3.03px 0;-webkit-text-stroke:0.2px #3b3b3b">H</div>
<div class="t" style="left:332.38px;top:135.00px;font-size:8.4px;line-height:9.39px;color:#3b3b3b;transform-origin:1.17px 0;-webkit-text-stroke:0.2px #3b3b3b">I</div>
<div class="t" style="left:368.95px;top:135.00px;font-size:8.4px;line-height:9.39px;color:#3b3b3b;transform-origin:2.10px 0;-webkit-text-stroke:0.2px #3b3b3b">J</div>
</div>
<div style="position:absolute;left:787px;top:132.5px;width:13px;height:264.5px;background:#dedede"></div>
<div style="position:absolute;left:786.6px;top:144px;width:0.8px;height:253px;background:#cfcfcf"></div>
<div style="position:absolute;left:789.3px;top:134.2px;width:8.9px;height:8px;background:#fff;border:1px solid #cfcfcf;box-sizing:border-box"></div>
<svg style="position:absolute;left:791.7px;top:136.9px;" width="4" height="2.5" viewBox="0 0 4 2.5"><path d="M0 2.5 L2 0 L4 2.5 z" fill="#444"/></svg>
<div style="position:absolute;left:789.3px;top:142.2px;width:8.9px;height:234.7px;background:#fff;border:1px solid #cfcfcf;box-sizing:border-box"></div>
<div style="position:absolute;left:789.3px;top:389.7px;width:8.9px;height:7.1px;background:#fff;border:1px solid #cfcfcf;box-sizing:border-box"></div>
<svg style="position:absolute;left:791.7px;top:392px;" width="4" height="2.5" viewBox="0 0 4 2.5"><path d="M0 0 L2 2.5 L4 0 z" fill="#444"/></svg>
<div style="position:absolute;left:0px;top:397px;width:399px;height:15.5px;background:#e6e6e6"></div>
<div style="position:absolute;left:0px;top:397px;width:399px;height:0.8px;background:#d0d0d0"></div>
<svg style="position:absolute;left:16px;top:402.5px;" width="3" height="6" viewBox="0 0 3 6"><path d="M2.5 0.5 L0.5 3 L2.5 5.5" fill="none" stroke="#c0c0c0" stroke-width="0.8"/></svg>
<svg style="position:absolute;left:32px;top:402.5px;" width="3" height="6" viewBox="0 0 3 6"><path d="M0.5 0.5 L2.5 3 L0.5 5.5" fill="none" stroke="#c0c0c0" stroke-width="0.8"/></svg>
<div style="position:absolute;left:58.5px;top:397px;width:38.2px;height:14px;background:#fff"></div>
<div style="position:absolute;left:58.8px;top:410.4px;width:37.6px;height:1.4px;background:#1d5e3c"></div>
<div style="position:absolute;left:58.2px;top:397px;width:0.8px;height:14px;background:#cfcfcf"></div>
<div style="position:absolute;left:96.4px;top:397px;width:0.8px;height:14px;background:#cfcfcf"></div>
<div class="t" style="left:63.93px;top:401.00px;font-size:8.4px;line-height:9.39px;color:#1d6a43;transform:scaleX(0.8677);transform-origin:13.77px 0;font-weight:bold;-webkit-text-stroke:0.2px #1d6a43">Sheet2</div>
<svg style="position:absolute;left:115.5px;top:400px;" width="10" height="10" viewBox="0 0 10 10"><circle cx="5" cy="5" r="4.3" fill="none" stroke="#6a6a6a" stroke-width="0.9"/><path d="M5 2.6 v4.8 M2.6 5 h4.8" stroke="#6a6a6a" stroke-width="0.9"/></svg>
<div style="position:absolute;left:238.7px;top:402.5px;width:1px;height:1.2px;background:#a8a8a8"></div>
<div style="position:absolute;left:238.7px;top:405.5px;width:1px;height:1.2px;background:#a8a8a8"></div>
<div style="position:absolute;left:238.7px;top:408.5px;width:1px;height:1.2px;background:#a8a8a8"></div>
<div style="position:absolute;left:249px;top:401.3px;width:8.3px;height:9px;background:#fff;border:1px solid #cfcfcf;box-sizing:border-box"></div>
<svg style="position:absolute;left:252px;top:404px;" width="2.5" height="4" viewBox="0 0 2.5 4"><path d="M2.5 0 L0 2 L2.5 4 z" fill="#444"/></svg>
<div style="position:absolute;left:287.5px;top:401.3px;width:74.5px;height:9px;background:#fff;border:1px solid #cfcfcf;box-sizing:border-box"></div>
<div style="position:absolute;left:377.5px;top:401.3px;width:9px;height:9px;background:#fff;border:1px solid #cfcfcf;box-sizing:border-box"></div>
<svg style="position:absolute;left:381.3px;top:404px;" width="2.5" height="4" viewBox="0 0 2.5 4"><path d="M0 0 L2.5 2 L0 4 z" fill="#444"/></svg>
<div style="position:absolute;left:0px;top:412.5px;width:399px;height:14px;background:#f3f3f3"></div>
<div class="t" style="left:4.70px;top:416.00px;font-size:8.4px;line-height:9.39px;color:#444;transform:scaleX(0.7495);transform-origin:0 0;">Ready</div>
<svg style="position:absolute;left:33.8px;top:416.4px;" width="9" height="8.2" viewBox="0 0 9 8.2"><rect x="0.6" y="0.6" width="7.8" height="7" rx="1" fill="#f0f0f0" stroke="#555" stroke-width="0.9" stroke-dasharray="1.3 0.5"/><path d="M1.5 1.5 L7.5 6.7 M7.5 1.5 L1.5 6.7" stroke="#888" stroke-width="0.6"/><circle cx="4.5" cy="4.6" r="1.1" fill="#222"/></svg>
<svg style="position:absolute;left:52.5px;top:416px;" width="9" height="8.2" viewBox="0 0 9 8.2"><circle cx="4.3" cy="1.3" r="1" fill="none" stroke="#444" stroke-width="0.8"/><path d="M0.8 2.8 L3.3 3.6 L6 2 M3.3 3.6 L2.6 5.8 L1 7.6 M2.6 5.8 L4.6 6.2 L5 7.9 M6.6 3.6 a2.6 2.6 0 0 1 0.6 3.6" fill="none" stroke="#444" stroke-width="0.9"/></svg>
<div class="t" style="left:62.80px;top:416.00px;font-size:8.4px;line-height:9.39px;color:#444;transform:scaleX(0.7815);transform-origin:0 0;">Accessibility: Unavailable</div>
<div style="position:absolute;left:218.3px;top:412.5px;width:22.6px;height:14.5px;background:#dcdcdc"></div>
<svg style="position:absolute;left:225px;top:415.5px;" width="9" height="8" viewBox="0 0 9 8"><rect x="0.5" y="0.5" width="8" height="7" fill="none" stroke="#666" stroke-width="0.8"/><path d="M0.5 2.8 h8 M0.5 5.2 h8 M3.2 0.5 v7 M5.8 0.5 v7" stroke="#666" stroke-width="0.6"/></svg>
<svg style="position:absolute;left:248px;top:415.5px;" width="9" height="8" viewBox="0 0 9 8"><rect x="0.5" y="0.5" width="8" height="7" fill="none" stroke="#666" stroke-width="0.8"/><path d="M2.8 0.5 v7 M5.8 0.5 v7" stroke="#666" stroke-width="0.6" stroke-dasharray="1 0.8"/></svg>
<svg style="position:absolute;left:271.5px;top:415.5px;" width="9" height="8" viewBox="0 0 9 8"><rect x="0.5" y="0.5" width="8" height="7" fill="none" stroke="#666" stroke-width="0.8"/><path d="M5 0.5 v3.5 h3.5" fill="none" stroke="#666" stroke-width="0.7"/></svg>
<div style="position:absolute;left:292px;top:419.3px;width:3.5px;height:0.9px;background:#666"></div>
<div style="position:absolute;left:298px;top:419.5px;width:59px;height:0.7px;background:#bbb"></div>
<div style="position:absolute;left:328.5px;top:416.8px;width:3px;height:6.2px;background:#555"></div>
<div style="position:absolute;left:360.8px;top:419.3px;width:4px;height:0.9px;background:#666"></div>
<div style="position:absolute;left:362.35px;top:417.3px;width:0.9px;height:4.2px;background:#666"></div>
<div class="t" style="left:373.20px;top:416.00px;font-size:8.4px;line-height:9.39px;color:#444;transform:scaleX(0.6981);transform-origin:0 0;">120%</div>
<div style="position:absolute;left:400px;top:397px;width:400px;height:15.5px;background:#e6e6e6"></div>
<div style="position:absolute;left:400px;top:397px;width:400px;height:0.8px;background:#d0d0d0"></div>
<svg style="position:absolute;left:416px;top:402.5px;" width="3" height="6" viewBox="0 0 3 6"><path d="M2.5 0.5 L0.5 3 L2.5 5.5" fill="none" stroke="#c0c0c0" stroke-width="0.8"/></svg>
<svg style="position:absolute;left:432px;top:402.5px;" width="3" height="6" viewBox="0 0 3 6"><path d="M0.5 0.5 L2.5 3 L0.5 5.5" fill="none" stroke="#c0c0c0" stroke-width="0.8"/></svg>
<div style="position:absolute;left:458.5px;top:397px;width:38.2px;height:14px;background:#fff"></div>
<div style="position:absolute;left:458.8px;top:410.4px;width:37.6px;height:1.4px;background:#1d5e3c"></div>
<div style="position:absolute;left:458.2px;top:397px;width:0.8px;height:14px;background:#cfcfcf"></div>
<div style="position:absolute;left:496.4px;top:397px;width:0.8px;height:14px;background:#cfcfcf"></div>
<div class="t" style="left:463.93px;top:401.00px;font-size:8.4px;line-height:9.39px;color:#1d6a43;transform:scaleX(0.8677);transform-origin:13.77px 0;font-weight:bold;-webkit-text-stroke:0.2px #1d6a43">Sheet1</div>
<svg style="position:absolute;left:515.5px;top:400px;" width="10" height="10" viewBox="0 0 10 10"><circle cx="5" cy="5" r="4.3" fill="none" stroke="#6a6a6a" stroke-width="0.9"/><path d="M5 2.6 v4.8 M2.6 5 h4.8" stroke="#6a6a6a" stroke-width="0.9"/></svg>
<div style="position:absolute;left:640.4px;top:402.5px;width:1px;height:1.2px;background:#a8a8a8"></div>
<div style="position:absolute;left:640.4px;top:405.5px;width:1px;height:1.2px;background:#a8a8a8"></div>
<div style="position:absolute;left:640.4px;top:408.5px;width:1px;height:1.2px;background:#a8a8a8"></div>
<div style="position:absolute;left:651px;top:401.3px;width:8.3px;height:9px;background:#fff;border:1px solid #cfcfcf;box-sizing:border-box"></div>
<svg style="position:absolute;left:654px;top:404px;" width="2.5" height="4" viewBox="0 0 2.5 4"><path d="M2.5 0 L0 2 L2.5 4 z" fill="#444"/></svg>
<div style="position:absolute;left:658.7px;top:401.3px;width:106.89999999999998px;height:9px;background:#fff;border:1px solid #cfcfcf;box-sizing:border-box"></div>
<div style="position:absolute;left:779px;top:401.3px;width:9px;height:9px;background:#fff;border:1px solid #cfcfcf;box-sizing:border-box"></div>
<svg style="position:absolute;left:782.8px;top:404px;" width="2.5" height="4" viewBox="0 0 2.5 4"><path d="M0 0 L2.5 2 L0 4 z" fill="#444"/></svg>
<div style="position:absolute;left:400px;top:412.5px;width:400px;height:14px;background:#f3f3f3"></div>
<div class="t" style="left:404.70px;top:416.00px;font-size:8.4px;line-height:9.39px;color:#444;transform:scaleX(0.7495);transform-origin:0 0;">Ready</div>
<svg style="position:absolute;left:433.8px;top:416.4px;" width="9" height="8.2" viewBox="0 0 9 8.2"><rect x="0.6" y="0.6" width="7.8" height="7" rx="1" fill="#f0f0f0" stroke="#555" stroke-width="0.9" stroke-dasharray="1.3 0.5"/><path d="M1.5 1.5 L7.5 6.7 M7.5 1.5 L1.5 6.7" stroke="#888" stroke-width="0.6"/><circle cx="4.5" cy="4.6" r="1.1" fill="#222"/></svg>
<svg style="position:absolute;left:452.5px;top:416px;" width="9" height="8.2" viewBox="0 0 9 8.2"><circle cx="4.3" cy="1.3" r="1" fill="none" stroke="#444" stroke-width="0.8"/><path d="M0.8 2.8 L3.3 3.6 L6 2 M3.3 3.6 L2.6 5.8 L1 7.6 M2.6 5.8 L4.6 6.2 L5 7.9 M6.6 3.6 a2.6 2.6 0 0 1 0.6 3.6" fill="none" stroke="#444" stroke-width="0.9"/></svg>
<div class="t" style="left:462.80px;top:416.00px;font-size:8.4px;line-height:9.39px;color:#444;transform:scaleX(0.7815);transform-origin:0 0;">Accessibility: Unavailable</div>
<div style="position:absolute;left:618.3px;top:412.5px;width:22.6px;height:14.5px;background:#dcdcdc"></div>
<svg style="position:absolute;left:625px;top:415.5px;" width="9" height="8" viewBox="0 0 9 8"><rect x="0.5" y="0.5" width="8" height="7" fill="none" stroke="#666" stroke-width="0.8"/><path d="M0.5 2.8 h8 M0.5 5.2 h8 M3.2 0.5 v7 M5.8 0.5 v7" stroke="#666" stroke-width="0.6"/></svg>
<svg style="position:absolute;left:648px;top:415.5px;" width="9" height="8" viewBox="0 0 9 8"><rect x="0.5" y="0.5" width="8" height="7" fill="none" stroke="#666" stroke-width="0.8"/><path d="M2.8 0.5 v7 M5.8 0.5 v7" stroke="#666" stroke-width="0.6" stroke-dasharray="1 0.8"/></svg>
<svg style="position:absolute;left:671.5px;top:415.5px;" width="9" height="8" viewBox="0 0 9 8"><rect x="0.5" y="0.5" width="8" height="7" fill="none" stroke="#666" stroke-width="0.8"/><path d="M5 0.5 v3.5 h3.5" fill="none" stroke="#666" stroke-width="0.7"/></svg>
<div style="position:absolute;left:692px;top:419.3px;width:3.5px;height:0.9px;background:#666"></div>
<div style="position:absolute;left:698px;top:419.5px;width:59px;height:0.7px;background:#bbb"></div>
<div style="position:absolute;left:727.3px;top:416.8px;width:3px;height:6.2px;background:#555"></div>
<div style="position:absolute;left:760.8px;top:419.3px;width:4px;height:0.9px;background:#666"></div>
<div style="position:absolute;left:762.35px;top:417.3px;width:0.9px;height:4.2px;background:#666"></div>
<div class="t" style="left:773.20px;top:416.00px;font-size:8.4px;line-height:9.39px;color:#444;transform:scaleX(0.6981);transform-origin:0 0;">100%</div>
<div style="position:absolute;left:398.5px;top:19px;width:0.9px;height:408px;background:#c4dccf"></div>
<div style="position:absolute;left:399.3px;top:0px;width:1px;height:427px;background:#2f6548"></div>
<div style="position:absolute;left:400.3px;top:19px;width:0.8px;height:408px;background:#b0b0b0"></div>
<div style="position:absolute;left:0px;top:426.5px;width:800px;height:23.5px;background:#1b1b1b"></div>
<div style="position:absolute;left:314.5px;top:426.5px;width:28.5px;height:2px;background:#6a6a6a"></div>
<div style="position:absolute;left:343px;top:426.5px;width:28.5px;height:2px;background:#e0823c"></div>
<svg style="position:absolute;left:8.2px;top:432.5px;" width="11" height="11" viewBox="0 0 11 11"><path d="M0 1.5 L4.8 0.8 V5.2 H0 z M5.6 0.7 L11 0 V5.2 H5.6 z M0 5.9 H4.8 V10.2 L0 9.5 z M5.6 5.9 H11 V11 L5.6 10.3 z" fill="#fff"/></svg>
<svg style="position:absolute;left:36.7px;top:432px;" width="11" height="11" viewBox="0 0 11 11"><circle cx="6.8" cy="4.2" r="3.4" fill="none" stroke="#fff" stroke-width="1"/><path d="M4.4 6.6 L0.7 10.3" stroke="#fff" stroke-width="1.1"/></svg>
<svg style="position:absolute;left:66px;top:433.8px;" width="9" height="9" viewBox="0 0 9 9"><circle cx="4.5" cy="4.5" r="3.7" fill="none" stroke="#fff" stroke-width="1.5"/></svg>
<svg style="position:absolute;left:92px;top:433px;" width="12" height="10" viewBox="0 0 12 10"><rect x="1.8" y="1.8" width="6" height="6" rx="1.5" fill="none" stroke="#e6e6e6" stroke-width="1.1"/><path d="M0.6 0.6 l1.6 1.6 M9 0.6 l-1.6 1.6 M0.6 9 l1.6 -1.6 M9 9 l-1.6 -1.6" stroke="#e6e6e6" stroke-width="0.9"/><path d="M10.4 0.5 v1.5 M10.4 6.8 v2.6" stroke="#bbb" stroke-width="0.8"/><circle cx="10.4" cy="3.7" r="0.9" fill="#fff"/></svg>
<svg style="position:absolute;left:668px;top:435px;" width="8" height="5" viewBox="0 0 8 5"><path d="M0.5 4.5 L4 1 L7.5 4.5" fill="none" stroke="#fff" stroke-width="1"/></svg>
<svg style="position:absolute;left:681px;top:433px;" width="11" height="9" viewBox="0 0 11 9"><rect x="2.5" y="3" width="8" height="5" fill="#dcdcdc"/><rect x="0.5" y="0.5" width="1.5" height="3" fill="#dcdcdc"/></svg>
<svg style="position:absolute;left:697px;top:433px;" width="8" height="9" viewBox="0 0 8 9"><path d="M0.5 8.5 A8 8 0 0 1 7.5 1.5 M2.5 8.5 A6 6 0 0 1 7.5 3.5 M4.5 8.5 A4 4 0 0 1 7.5 5.5" fill="none" stroke="#9a9a9a" stroke-width="0.8"/></svg>
<div class="t" style="left:710.75px;top:435.00px;font-size:8px;line-height:8.94px;color:#fff;transform:scaleX(0.7614);transform-origin:0 0;">ENG</div>
<div class="t" style="left:734.40px;top:430.00px;font-size:8px;line-height:8.94px;color:#fff;transform:scaleX(0.8284);transform-origin:0 0;">10:55 CH</div>
<div class="t" style="left:731.40px;top:440.00px;font-size:8px;line-height:8.94px;color:#fff;transform:scaleX(0.8431);transform-origin:0 0;">2021-09-08</div>
<svg style="position:absolute;left:776px;top:433px;" width="16" height="15" viewBox="0 0 16 15"><path d="M0.6 0.6 h10.4 v7.6 h-4.6 l-2.4 2.6 v-2.6 h-3.4 z" fill="none" stroke="#fff" stroke-width="1"/><path d="M2.4 2.6 h6.8 M2.4 4.4 h6.8 M2.4 6.2 h4.5" stroke="#fff" stroke-width="0.8"/><circle cx="11" cy="10.2" r="3.6" fill="#1b1b1b" stroke="#cfcfcf" stroke-width="0.8"/><path d="M10.2 8.6 l1.2 -0.9 v5.2" fill="none" stroke="#fff" stroke-width="0.9"/></svg>
<div style="position:absolute;left:797.2px;top:426.5px;width:1.4px;height:23.5px;background:#4a4a4a"></div>
</div></body></html>
